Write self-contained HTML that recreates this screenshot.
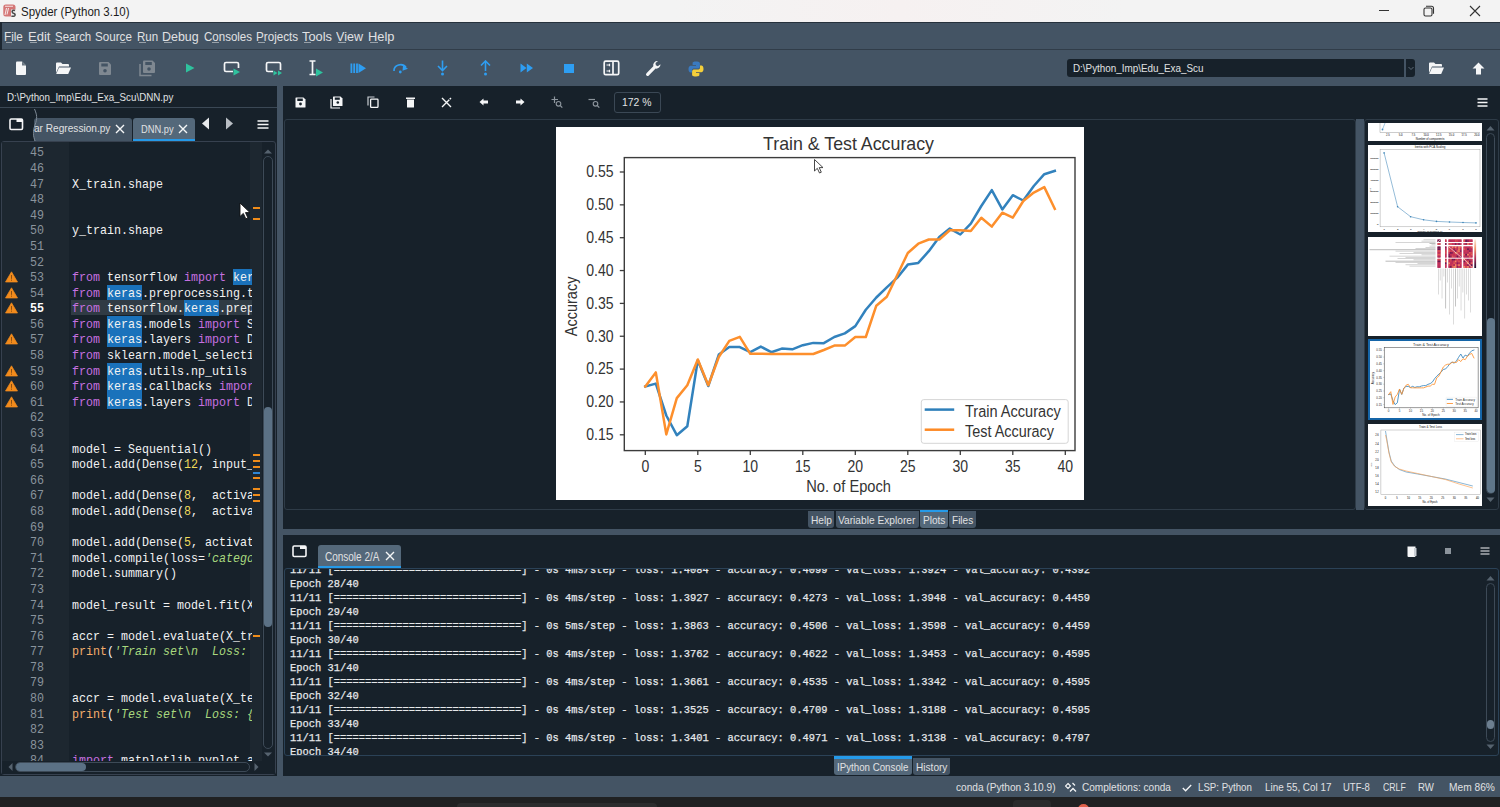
<!DOCTYPE html>
<html><head><meta charset="utf-8">
<style>
*{margin:0;padding:0;box-sizing:border-box}
html,body{width:1500px;height:807px;overflow:hidden}
body{position:relative;background:#17212a;font-family:"Liberation Sans",sans-serif;color:#e0e1e3}
.a{position:absolute}
.t{white-space:pre}
svg{display:block}
</style></head><body>
<div class="a" style="left:0px;top:0px;width:1500px;height:22px;background:linear-gradient(90deg,#f3f3f3 0%,#f3f3f3 45%,#f6f1f1 60%,#f3f3f3 75%);"></div>
<svg class="a" style="left:3px;top:4px;" width="13" height="13" viewBox="0 0 13 13"><rect x="0.3" y="0.5" width="12.2" height="12" rx="2.5" fill="#d47676"/><path d="M2 2.3 H10 M3.5 4 L2 11 M5.5 4 L4 10.5" stroke="#f6e4e4" stroke-width="1.1" fill="none"/><rect x="8" y="5.5" width="5" height="7" fill="#ededed"/><path d="M12 6.5 Q9 5.8 9.2 7.8 Q9.5 9.3 11 9.5 Q12.5 10 11.8 11.6 Q11 12.8 8.5 12" stroke="#4a4a4a" stroke-width="1.6" fill="none"/></svg>
<div class="a t" style="left:21.26px;top:5.90px;font-size:12.4px;line-height:12.4px;font-family:'Liberation Sans',sans-serif;color:#1b1b1b;transform:scaleX(0.9269);transform-origin:0 0;">Spyder (Python 3.10)</div>
<div class="a" style="left:1379px;top:10px;width:10px;height:1px;background:#333;"></div>
<svg class="a" style="left:1423px;top:5px;" width="12" height="12" viewBox="0 0 12 12"><rect x="1" y="3" width="8" height="8" rx="1.5" fill="none" stroke="#333" stroke-width="1.1"/><path d="M3 1.2 H8.5 a2 2 0 0 1 2 2 V8.8" fill="none" stroke="#333" stroke-width="1.1"/></svg>
<svg class="a" style="left:1469px;top:5px;" width="12" height="12" viewBox="0 0 12 12"><path d="M1 1 L11 11 M11 1 L1 11" stroke="#333" stroke-width="1.1"/></svg>
<div class="a" style="left:0px;top:22px;width:1500px;height:28px;background:#445464;"></div>
<div class="a" style="left:0px;top:22px;width:1500px;height:1px;background:#26313c;"></div>
<div class="a" style="left:0px;top:49px;width:1500px;height:1px;background:#313d49;"></div>
<div class="a" style="left:0px;top:22px;width:2px;height:28px;background:#1d2731;"></div>
<div class="a t" style="left:4.47px;top:31.07px;font-size:12.2px;line-height:12.2px;font-family:'Liberation Sans',sans-serif;color:#e0e1e3;transform:scaleX(0.9601);transform-origin:0 0;">File</div>
<div class="a t" style="left:28.07px;top:31.07px;font-size:12.2px;line-height:12.2px;font-family:'Liberation Sans',sans-serif;color:#e0e1e3;transform:scaleX(1.0652);transform-origin:0 0;">Edit</div>
<div class="a t" style="left:54.77px;top:31.07px;font-size:12.2px;line-height:12.2px;font-family:'Liberation Sans',sans-serif;color:#e0e1e3;transform:scaleX(0.9382);transform-origin:0 0;">Search</div>
<div class="a t" style="left:95.47px;top:31.07px;font-size:12.2px;line-height:12.2px;font-family:'Liberation Sans',sans-serif;color:#e0e1e3;transform:scaleX(0.9542);transform-origin:0 0;">Source</div>
<div class="a t" style="left:137.17px;top:31.07px;font-size:12.2px;line-height:12.2px;font-family:'Liberation Sans',sans-serif;color:#e0e1e3;transform:scaleX(0.9455);transform-origin:0 0;">Run</div>
<div class="a t" style="left:162.47px;top:31.07px;font-size:12.2px;line-height:12.2px;font-family:'Liberation Sans',sans-serif;color:#e0e1e3;transform:scaleX(1.0197);transform-origin:0 0;">Debug</div>
<div class="a t" style="left:203.77px;top:31.07px;font-size:12.2px;line-height:12.2px;font-family:'Liberation Sans',sans-serif;color:#e0e1e3;transform:scaleX(0.9455);transform-origin:0 0;">Consoles</div>
<div class="a t" style="left:256.37px;top:31.07px;font-size:12.2px;line-height:12.2px;font-family:'Liberation Sans',sans-serif;color:#e0e1e3;transform:scaleX(0.9574);transform-origin:0 0;">Projects</div>
<div class="a t" style="left:302.47px;top:31.07px;font-size:12.2px;line-height:12.2px;font-family:'Liberation Sans',sans-serif;color:#e0e1e3;transform:scaleX(1.0529);transform-origin:0 0;">Tools</div>
<div class="a t" style="left:336.47px;top:31.07px;font-size:12.2px;line-height:12.2px;font-family:'Liberation Sans',sans-serif;color:#e0e1e3;transform:scaleX(1.0280);transform-origin:0 0;">View</div>
<div class="a t" style="left:368.07px;top:31.07px;font-size:12.2px;line-height:12.2px;font-family:'Liberation Sans',sans-serif;color:#e0e1e3;transform:scaleX(1.0556);transform-origin:0 0;">Help</div>
<div class="a" style="left:6px;top:42px;width:6px;height:1px;background:rgba(224,225,227,.55);"></div>
<div class="a" style="left:30px;top:42px;width:7px;height:1px;background:rgba(224,225,227,.55);"></div>
<div class="a" style="left:56px;top:42px;width:7px;height:1px;background:rgba(224,225,227,.55);"></div>
<div class="a" style="left:120px;top:42px;width:6px;height:1px;background:rgba(224,225,227,.55);"></div>
<div class="a" style="left:139px;top:42px;width:7px;height:1px;background:rgba(224,225,227,.55);"></div>
<div class="a" style="left:164px;top:42px;width:8px;height:1px;background:rgba(224,225,227,.55);"></div>
<div class="a" style="left:212px;top:42px;width:7px;height:1px;background:rgba(224,225,227,.55);"></div>
<div class="a" style="left:258px;top:42px;width:7px;height:1px;background:rgba(224,225,227,.55);"></div>
<div class="a" style="left:304px;top:42px;width:7px;height:1px;background:rgba(224,225,227,.55);"></div>
<div class="a" style="left:338px;top:42px;width:8px;height:1px;background:rgba(224,225,227,.55);"></div>
<div class="a" style="left:370px;top:42px;width:8px;height:1px;background:rgba(224,225,227,.55);"></div>
<div class="a" style="left:0px;top:50px;width:1500px;height:36px;background:#445464;"></div>
<svg class="a" style="left:15px;top:61px;" width="12" height="15" viewBox="0 0 12 15"><path d="M1 1.5 Q1 0.5 2 0.5 H7 L11 4.5 V13 Q11 14 10 14 H2 Q1 14 1 13 Z" fill="#f5f6f7"/><path d="M7 0.5 V4.5 H11 Z" fill="#6a7682"/></svg>
<svg class="a" style="left:55px;top:62px;" width="17" height="13" viewBox="0 0 17 13"><path d="M1 1.5 Q1 0.5 2 0.5 H6 L7.5 2 H13 Q14 2 14 3 V4.5 H4 L1 11 Z" fill="#f5f6f7"/><path d="M4 5.5 H16 L13.2 12 H1.2 Z" fill="#f5f6f7"/></svg>
<svg class="a" style="left:98px;top:62px;" width="14" height="13" viewBox="0 0 14 13"><path d="M1 1 Q1 0 2 0 H10.5 L13 2.5 V12 Q13 13 12 13 H2 Q1 13 1 12 Z" fill="#7f8891"/><rect x="3.3" y="1.5" width="6.5" height="3" fill="#445464"/><circle cx="7" cy="8.8" r="1.8" fill="#445464"/></svg>
<svg class="a" style="left:139px;top:60px;" width="17" height="17" viewBox="0 0 17 17"><path d="M1 4 V15.5 H12.5" fill="none" stroke="#7f8891" stroke-width="1.5"/><path d="M4 1.5 Q4 0.5 5 0.5 H13.5 L16 3 V12 Q16 13 15 13 H5 Q4 13 4 12 Z" fill="#7f8891"/><rect x="6.3" y="2" width="6.5" height="3" fill="#445464"/><circle cx="10" cy="9" r="1.8" fill="#445464"/></svg>
<svg class="a" style="left:185px;top:63px;" width="10" height="10" viewBox="0 0 10 10"><path d="M1 0.5 L9.5 5 L1 9.5 Z" fill="#2fc29e"/></svg>
<svg class="a" style="left:223px;top:61px;" width="18" height="15" viewBox="0 0 18 15"><path d="M10 10.5 H3 Q1.5 10.5 1.5 9 V3 Q1.5 1.5 3 1.5 H14 Q15.5 1.5 15.5 3 V7" fill="none" stroke="#f5f6f7" stroke-width="1.7"/><path d="M10.5 7.5 L17 11 L10.5 14.5 Z" fill="#2fc29e"/></svg>
<svg class="a" style="left:265px;top:61px;" width="18" height="15" viewBox="0 0 18 15"><path d="M8 10.5 H3 Q1.5 10.5 1.5 9 V3 Q1.5 1.5 3 1.5 H14 Q15.5 1.5 15.5 3 V9" fill="none" stroke="#f5f6f7" stroke-width="1.7"/><path d="M8.5 9.5 L12.5 12 L8.5 14.5 Z M13 9.5 L17 12 L13 14.5 Z" fill="#2fc29e"/></svg>
<svg class="a" style="left:308px;top:60px;" width="16" height="17" viewBox="0 0 16 17"><path d="M1.5 1 H7.5 M4.5 1 V14.5 M1.5 14.5 H7.5" fill="none" stroke="#f5f6f7" stroke-width="1.7"/><path d="M8 8.5 L15 12.5 L8 16.5 Z" fill="#2fc29e"/></svg>
<svg class="a" style="left:350px;top:63px;" width="17" height="11" viewBox="0 0 17 11"><rect x="0.5" y="0.5" width="1.8" height="9.5" fill="#2e9ef2"/><rect x="3.3" y="0.5" width="1.8" height="9.5" fill="#2e9ef2"/><rect x="6.1" y="0.5" width="1.8" height="9.5" fill="#2e9ef2"/><path d="M8.5 0.5 L16 5.2 L8.5 10 Z" fill="#2e9ef2"/></svg>
<svg class="a" style="left:392px;top:62px;" width="17" height="12" viewBox="0 0 17 12"><path d="M2 9 A6.5 6 0 0 1 14 5.5" fill="none" stroke="#2e9ef2" stroke-width="1.7"/><path d="M11 3.5 L16 6.8 L10.5 8.8 Z" fill="#2e9ef2"/><circle cx="8.3" cy="10" r="1.4" fill="#2e9ef2"/></svg>
<svg class="a" style="left:436px;top:60px;" width="13" height="16" viewBox="0 0 13 16"><path d="M6.5 0.5 V10" stroke="#2e9ef2" stroke-width="1.6"/><path d="M2 6 L6.5 10.5 L11 6" fill="none" stroke="#2e9ef2" stroke-width="1.6"/><circle cx="6.5" cy="14" r="1.5" fill="#2e9ef2"/></svg>
<svg class="a" style="left:479px;top:60px;" width="13" height="16" viewBox="0 0 13 16"><path d="M6.5 2 V11" stroke="#2e9ef2" stroke-width="1.6"/><path d="M2 5.5 L6.5 1 L11 5.5" fill="none" stroke="#2e9ef2" stroke-width="1.6"/><circle cx="6.5" cy="14" r="1.5" fill="#2e9ef2"/></svg>
<svg class="a" style="left:520px;top:63px;" width="14" height="10" viewBox="0 0 14 10"><path d="M0.5 0.5 L6.5 5 L0.5 9.5 Z M6.8 0.5 L13 5 L6.8 9.5 Z" fill="#2e9ef2"/></svg>
<div class="a" style="left:564px;top:64px;width:10px;height:9px;background:#2e9ef2;"></div>
<svg class="a" style="left:603px;top:60px;" width="17" height="16" viewBox="0 0 17 16"><rect x="1.2" y="1.2" width="14.5" height="13.5" rx="1.5" fill="none" stroke="#f5f6f7" stroke-width="1.7"/><path d="M10 1.5 V14.5" stroke="#f5f6f7" stroke-width="1.7"/><path d="M3.5 5 H6.5 M3.5 11 H6.5" stroke="#f5f6f7" stroke-width="1.2"/><path d="M6.5 3.8 V6.2 M6.5 9.8 V12.2" stroke="#f5f6f7" stroke-width="1.2"/></svg>
<svg class="a" style="left:645px;top:60px;" width="17" height="17" viewBox="0 0 17 17"><path d="M15.5 4.2 L12.8 6.2 L10.8 5.2 L10.5 3 L13 1 A4.3 4.3 0 0 0 8.3 6.3 L1.5 13.2 A1.6 1.6 0 0 0 3.8 15.5 L10.6 8.6 A4.3 4.3 0 0 0 15.5 4.2 Z" fill="#f5f6f7"/></svg>
<svg class="a" style="left:688px;top:61px;" width="16" height="16" viewBox="0 0 16 16"><path d="M7.8 0.5 C4.5 0.5 4.6 1.9 4.6 1.9 V4 H8 V4.7 H3 C3 4.7 0.5 4.5 0.5 8 C0.5 11.5 2.6 11.4 2.6 11.4 H4 V9.6 C4 9.6 3.9 7.4 6.2 7.4 H9.8 C9.8 7.4 11.9 7.5 11.9 5.4 V2.3 C11.9 2.3 12.2 0.5 7.8 0.5 Z" fill="#3a7ac0"/><path d="M8.2 15.5 C11.5 15.5 11.4 14.1 11.4 14.1 V12 H8 V11.3 H13 C13 11.3 15.5 11.5 15.5 8 C15.5 4.5 13.4 4.6 13.4 4.6 H12 V6.4 C12 6.4 12.1 8.6 9.8 8.6 H6.2 C6.2 8.6 4.1 8.5 4.1 10.6 V13.7 C4.1 13.7 3.8 15.5 8.2 15.5 Z" fill="#f4cf3a"/></svg>
<div class="a" style="left:1067px;top:59px;width:348px;height:18px;background:#17212a;border-radius:3px"></div>
<div class="a" style="left:1404px;top:59px;width:2px;height:18px;background:#445464;"></div>
<svg class="a" style="left:1407px;top:64px;" width="8" height="8" viewBox="0 0 8 8"><path d="M1.5 3 L4 5.5 L6.5 3" fill="none" stroke="#5d6b78" stroke-width="1"/></svg>
<div class="a t" style="left:1073.34px;top:63.09px;font-size:11.0px;line-height:11.0px;font-family:'Liberation Sans',sans-serif;color:#e0e1e3;transform:scaleX(0.8959);transform-origin:0 0;">D:\Python_Imp\Edu_Exa_Scu</div>
<svg class="a" style="left:1428px;top:62px;" width="17" height="13" viewBox="0 0 17 13"><path d="M1 1.5 Q1 0.5 2 0.5 H6 L7.5 2 H13 Q14 2 14 3 V4.5 H4 L1 11 Z" fill="#f5f6f7"/><path d="M4 5.5 H16 L13.2 12 H1.2 Z" fill="#f5f6f7"/></svg>
<svg class="a" style="left:1472px;top:62px;" width="13" height="13" viewBox="0 0 13 13"><path d="M6.5 0.5 L12.5 6.5 H9 V12.5 H4 V6.5 H0.5 Z" fill="#f5f6f7"/></svg>
<div class="a" style="left:0px;top:86px;width:277px;height:690px;background:#17212a;"></div>
<div class="a t" style="left:6.93px;top:92.02px;font-size:11.2px;line-height:11.2px;font-family:'Liberation Sans',sans-serif;color:#e0e1e3;transform:scaleX(0.8744);transform-origin:0 0;">D:\Python_Imp\Edu_Exa_Scu\DNN.py</div>
<div class="a" style="left:0px;top:107px;width:277px;height:1px;background:#3b4855;"></div>
<svg class="a" style="left:9px;top:118px;" width="15" height="13" viewBox="0 0 15 13"><rect x="1" y="1" width="12.5" height="10.5" rx="1.2" fill="none" stroke="#f5f6f7" stroke-width="1.6"/><rect x="7.5" y="1" width="6" height="3" fill="#f5f6f7"/></svg>
<div class="a" style="left:34px;top:118px;width:98px;height:23px;background:#445464;border-radius:3px 3px 0 0"></div>
<svg class="a" style="left:31px;top:109px;" width="8" height="33" viewBox="0 0 8 33"><path d="M3.5 0 C6 6 6.5 9 4 16 C1.5 23 2 27 4.5 33" fill="none" stroke="#7e8a96" stroke-width="1"/></svg>
<div class="a" style="left:28px;top:109px;width:5px;height:33px;background:#17212a;"></div>
<div class="a t" style="left:34.33px;top:123.32px;font-size:11.2px;line-height:11.2px;font-family:'Liberation Sans',sans-serif;color:#e0e1e3;transform:scaleX(0.9036);transform-origin:0 0;">ar Regression.py</div>
<svg class="a" style="left:115px;top:124px;" width="10" height="10" viewBox="0 0 10 10"><path d="M1 1 L9 9 M9 1 L1 9" stroke="#f5f6f7" stroke-width="1.4"/></svg>
<div class="a" style="left:133px;top:118px;width:62px;height:24px;background:#54687a;border-radius:3px 3px 0 0"></div>
<div class="a" style="left:133px;top:139px;width:62px;height:3px;background:#259ae9;"></div>
<div class="a t" style="left:141.33px;top:123.52px;font-size:11.2px;line-height:11.2px;font-family:'Liberation Sans',sans-serif;color:#e0e1e3;transform:scaleX(0.8308);transform-origin:0 0;">DNN.py</div>
<svg class="a" style="left:178px;top:124px;" width="10" height="10" viewBox="0 0 10 10"><path d="M1 1 L9 9 M9 1 L1 9" stroke="#f5f6f7" stroke-width="1.4"/></svg>
<svg class="a" style="left:201px;top:117px;" width="9" height="13" viewBox="0 0 9 13"><path d="M8 0.5 V12.5 L1 6.5 Z" fill="#e8eaec"/></svg>
<svg class="a" style="left:225px;top:117px;" width="9" height="13" viewBox="0 0 9 13"><path d="M1 0.5 V12.5 L8 6.5 Z" fill="#b9bec4"/></svg>
<svg class="a" style="left:257px;top:120px;" width="12" height="9" viewBox="0 0 12 9"><path d="M0.5 1 H11.5 M0.5 4.5 H11.5 M0.5 8 H11.5" stroke="#f5f6f7" stroke-width="1.3"/></svg>
<div class="a" style="left:1px;top:141px;width:275px;height:634px;background:#17212a;border:1px solid #37414f;border-radius:3px"></div>
<div class="a" style="left:2px;top:142px;width:67px;height:620px;background:#1d2730;"></div>
<div class="a" style="left:250px;top:142px;width:12px;height:620px;background:#1d2730;"></div>
<div class="a" style="left:71px;top:300.40000000000003px;width:181px;height:14.9px;background:#303b44;"></div>
<div class="a t" style="left:29.80px;top:147.39px;font-size:12.8px;line-height:12.8px;font-family:'Liberation Mono',monospace;color:#8a949d;transform:scaleX(0.911);transform-origin:0 0;">45</div>
<div class="a t" style="left:29.80px;top:162.98px;font-size:12.8px;line-height:12.8px;font-family:'Liberation Mono',monospace;color:#8a949d;transform:scaleX(0.911);transform-origin:0 0;">46</div>
<div class="a t" style="left:29.80px;top:178.57px;font-size:12.8px;line-height:12.8px;font-family:'Liberation Mono',monospace;color:#8a949d;transform:scaleX(0.911);transform-origin:0 0;">47</div>
<div class="a t" style="left:29.80px;top:194.16px;font-size:12.8px;line-height:12.8px;font-family:'Liberation Mono',monospace;color:#8a949d;transform:scaleX(0.911);transform-origin:0 0;">48</div>
<div class="a t" style="left:29.80px;top:209.75px;font-size:12.8px;line-height:12.8px;font-family:'Liberation Mono',monospace;color:#8a949d;transform:scaleX(0.911);transform-origin:0 0;">49</div>
<div class="a t" style="left:29.80px;top:225.34px;font-size:12.8px;line-height:12.8px;font-family:'Liberation Mono',monospace;color:#8a949d;transform:scaleX(0.911);transform-origin:0 0;">50</div>
<div class="a t" style="left:29.80px;top:240.93px;font-size:12.8px;line-height:12.8px;font-family:'Liberation Mono',monospace;color:#8a949d;transform:scaleX(0.911);transform-origin:0 0;">51</div>
<div class="a t" style="left:29.80px;top:256.52px;font-size:12.8px;line-height:12.8px;font-family:'Liberation Mono',monospace;color:#8a949d;transform:scaleX(0.911);transform-origin:0 0;">52</div>
<div class="a t" style="left:29.80px;top:272.11px;font-size:12.8px;line-height:12.8px;font-family:'Liberation Mono',monospace;color:#8a949d;transform:scaleX(0.911);transform-origin:0 0;">53</div>
<div class="a t" style="left:29.80px;top:287.70px;font-size:12.8px;line-height:12.8px;font-family:'Liberation Mono',monospace;color:#8a949d;transform:scaleX(0.911);transform-origin:0 0;">54</div>
<div class="a t" style="left:29.80px;top:303.29px;font-size:12.8px;line-height:12.8px;font-family:'Liberation Mono',monospace;color:#ffffff;font-weight:bold;transform:scaleX(0.911);transform-origin:0 0;">55</div>
<div class="a t" style="left:29.80px;top:318.88px;font-size:12.8px;line-height:12.8px;font-family:'Liberation Mono',monospace;color:#8a949d;transform:scaleX(0.911);transform-origin:0 0;">56</div>
<div class="a t" style="left:29.80px;top:334.47px;font-size:12.8px;line-height:12.8px;font-family:'Liberation Mono',monospace;color:#8a949d;transform:scaleX(0.911);transform-origin:0 0;">57</div>
<div class="a t" style="left:29.80px;top:350.06px;font-size:12.8px;line-height:12.8px;font-family:'Liberation Mono',monospace;color:#8a949d;transform:scaleX(0.911);transform-origin:0 0;">58</div>
<div class="a t" style="left:29.80px;top:365.65px;font-size:12.8px;line-height:12.8px;font-family:'Liberation Mono',monospace;color:#8a949d;transform:scaleX(0.911);transform-origin:0 0;">59</div>
<div class="a t" style="left:29.80px;top:381.24px;font-size:12.8px;line-height:12.8px;font-family:'Liberation Mono',monospace;color:#8a949d;transform:scaleX(0.911);transform-origin:0 0;">60</div>
<div class="a t" style="left:29.80px;top:396.83px;font-size:12.8px;line-height:12.8px;font-family:'Liberation Mono',monospace;color:#8a949d;transform:scaleX(0.911);transform-origin:0 0;">61</div>
<div class="a t" style="left:29.80px;top:412.42px;font-size:12.8px;line-height:12.8px;font-family:'Liberation Mono',monospace;color:#8a949d;transform:scaleX(0.911);transform-origin:0 0;">62</div>
<div class="a t" style="left:29.80px;top:428.01px;font-size:12.8px;line-height:12.8px;font-family:'Liberation Mono',monospace;color:#8a949d;transform:scaleX(0.911);transform-origin:0 0;">63</div>
<div class="a t" style="left:29.80px;top:443.60px;font-size:12.8px;line-height:12.8px;font-family:'Liberation Mono',monospace;color:#8a949d;transform:scaleX(0.911);transform-origin:0 0;">64</div>
<div class="a t" style="left:29.80px;top:459.19px;font-size:12.8px;line-height:12.8px;font-family:'Liberation Mono',monospace;color:#8a949d;transform:scaleX(0.911);transform-origin:0 0;">65</div>
<div class="a t" style="left:29.80px;top:474.78px;font-size:12.8px;line-height:12.8px;font-family:'Liberation Mono',monospace;color:#8a949d;transform:scaleX(0.911);transform-origin:0 0;">66</div>
<div class="a t" style="left:29.80px;top:490.37px;font-size:12.8px;line-height:12.8px;font-family:'Liberation Mono',monospace;color:#8a949d;transform:scaleX(0.911);transform-origin:0 0;">67</div>
<div class="a t" style="left:29.80px;top:505.96px;font-size:12.8px;line-height:12.8px;font-family:'Liberation Mono',monospace;color:#8a949d;transform:scaleX(0.911);transform-origin:0 0;">68</div>
<div class="a t" style="left:29.80px;top:521.55px;font-size:12.8px;line-height:12.8px;font-family:'Liberation Mono',monospace;color:#8a949d;transform:scaleX(0.911);transform-origin:0 0;">69</div>
<div class="a t" style="left:29.80px;top:537.14px;font-size:12.8px;line-height:12.8px;font-family:'Liberation Mono',monospace;color:#8a949d;transform:scaleX(0.911);transform-origin:0 0;">70</div>
<div class="a t" style="left:29.80px;top:552.73px;font-size:12.8px;line-height:12.8px;font-family:'Liberation Mono',monospace;color:#8a949d;transform:scaleX(0.911);transform-origin:0 0;">71</div>
<div class="a t" style="left:29.80px;top:568.32px;font-size:12.8px;line-height:12.8px;font-family:'Liberation Mono',monospace;color:#8a949d;transform:scaleX(0.911);transform-origin:0 0;">72</div>
<div class="a t" style="left:29.80px;top:583.91px;font-size:12.8px;line-height:12.8px;font-family:'Liberation Mono',monospace;color:#8a949d;transform:scaleX(0.911);transform-origin:0 0;">73</div>
<div class="a t" style="left:29.80px;top:599.50px;font-size:12.8px;line-height:12.8px;font-family:'Liberation Mono',monospace;color:#8a949d;transform:scaleX(0.911);transform-origin:0 0;">74</div>
<div class="a t" style="left:29.80px;top:615.09px;font-size:12.8px;line-height:12.8px;font-family:'Liberation Mono',monospace;color:#8a949d;transform:scaleX(0.911);transform-origin:0 0;">75</div>
<div class="a t" style="left:29.80px;top:630.68px;font-size:12.8px;line-height:12.8px;font-family:'Liberation Mono',monospace;color:#8a949d;transform:scaleX(0.911);transform-origin:0 0;">76</div>
<div class="a t" style="left:29.80px;top:646.27px;font-size:12.8px;line-height:12.8px;font-family:'Liberation Mono',monospace;color:#8a949d;transform:scaleX(0.911);transform-origin:0 0;">77</div>
<div class="a t" style="left:29.80px;top:661.86px;font-size:12.8px;line-height:12.8px;font-family:'Liberation Mono',monospace;color:#8a949d;transform:scaleX(0.911);transform-origin:0 0;">78</div>
<div class="a t" style="left:29.80px;top:677.45px;font-size:12.8px;line-height:12.8px;font-family:'Liberation Mono',monospace;color:#8a949d;transform:scaleX(0.911);transform-origin:0 0;">79</div>
<div class="a t" style="left:29.80px;top:693.04px;font-size:12.8px;line-height:12.8px;font-family:'Liberation Mono',monospace;color:#8a949d;transform:scaleX(0.911);transform-origin:0 0;">80</div>
<div class="a t" style="left:29.80px;top:708.63px;font-size:12.8px;line-height:12.8px;font-family:'Liberation Mono',monospace;color:#8a949d;transform:scaleX(0.911);transform-origin:0 0;">81</div>
<div class="a t" style="left:29.80px;top:724.22px;font-size:12.8px;line-height:12.8px;font-family:'Liberation Mono',monospace;color:#8a949d;transform:scaleX(0.911);transform-origin:0 0;">82</div>
<div class="a t" style="left:29.80px;top:739.81px;font-size:12.8px;line-height:12.8px;font-family:'Liberation Mono',monospace;color:#8a949d;transform:scaleX(0.911);transform-origin:0 0;">83</div>
<div class="a t" style="left:29.80px;top:755.40px;font-size:12.8px;line-height:12.8px;font-family:'Liberation Mono',monospace;color:#8a949d;transform:scaleX(0.911);transform-origin:0 0;">84</div>
<svg class="a" style="left:5px;top:271.11999999999995px;" width="13" height="12" viewBox="0 0 13 12"><path d="M6.5 0.8 L12.5 11 H0.5 Z" fill="#f28b1c" stroke="#f28b1c" stroke-width="0.7" stroke-linejoin="round"/><rect x="6" y="4" width="1" height="3.8" fill="#8a4f12"/><rect x="6" y="8.6" width="1" height="1.1" fill="#8a4f12"/></svg>
<svg class="a" style="left:5px;top:286.71px;" width="13" height="12" viewBox="0 0 13 12"><path d="M6.5 0.8 L12.5 11 H0.5 Z" fill="#f28b1c" stroke="#f28b1c" stroke-width="0.7" stroke-linejoin="round"/><rect x="6" y="4" width="1" height="3.8" fill="#8a4f12"/><rect x="6" y="8.6" width="1" height="1.1" fill="#8a4f12"/></svg>
<svg class="a" style="left:5px;top:302.3px;" width="13" height="12" viewBox="0 0 13 12"><path d="M6.5 0.8 L12.5 11 H0.5 Z" fill="#f28b1c" stroke="#f28b1c" stroke-width="0.7" stroke-linejoin="round"/><rect x="6" y="4" width="1" height="3.8" fill="#8a4f12"/><rect x="6" y="8.6" width="1" height="1.1" fill="#8a4f12"/></svg>
<svg class="a" style="left:5px;top:333.47999999999996px;" width="13" height="12" viewBox="0 0 13 12"><path d="M6.5 0.8 L12.5 11 H0.5 Z" fill="#f28b1c" stroke="#f28b1c" stroke-width="0.7" stroke-linejoin="round"/><rect x="6" y="4" width="1" height="3.8" fill="#8a4f12"/><rect x="6" y="8.6" width="1" height="1.1" fill="#8a4f12"/></svg>
<svg class="a" style="left:5px;top:364.65999999999997px;" width="13" height="12" viewBox="0 0 13 12"><path d="M6.5 0.8 L12.5 11 H0.5 Z" fill="#f28b1c" stroke="#f28b1c" stroke-width="0.7" stroke-linejoin="round"/><rect x="6" y="4" width="1" height="3.8" fill="#8a4f12"/><rect x="6" y="8.6" width="1" height="1.1" fill="#8a4f12"/></svg>
<svg class="a" style="left:5px;top:380.24999999999994px;" width="13" height="12" viewBox="0 0 13 12"><path d="M6.5 0.8 L12.5 11 H0.5 Z" fill="#f28b1c" stroke="#f28b1c" stroke-width="0.7" stroke-linejoin="round"/><rect x="6" y="4" width="1" height="3.8" fill="#8a4f12"/><rect x="6" y="8.6" width="1" height="1.1" fill="#8a4f12"/></svg>
<svg class="a" style="left:5px;top:395.84px;" width="13" height="12" viewBox="0 0 13 12"><path d="M6.5 0.8 L12.5 11 H0.5 Z" fill="#f28b1c" stroke="#f28b1c" stroke-width="0.7" stroke-linejoin="round"/><rect x="6" y="4" width="1" height="3.8" fill="#8a4f12"/><rect x="6" y="8.6" width="1" height="1.1" fill="#8a4f12"/></svg>
<div class="a" style="left:71.7px;top:142px;width:180.5px;height:620px;overflow:hidden">
<div class="a t" style="left:0.00px;top:36.57px;font-size:12.8px;line-height:12.8px;font-family:'Liberation Mono',monospace;color:#f2f2f2;transform:scaleX(0.911);transform-origin:0 0;">X_train.shape</div>
<div class="a t" style="left:0.00px;top:83.34px;font-size:12.8px;line-height:12.8px;font-family:'Liberation Mono',monospace;color:#f2f2f2;transform:scaleX(0.911);transform-origin:0 0;">y_train.shape</div>
<div class="a t" style="left:0.00px;top:130.11px;font-size:12.8px;line-height:12.8px;font-family:'Liberation Mono',monospace;color:#c670e0;transform:scaleX(0.911);transform-origin:0 0;">from</div>
<div class="a t" style="left:28.00px;top:130.11px;font-size:12.8px;line-height:12.8px;font-family:'Liberation Mono',monospace;color:#f2f2f2;transform:scaleX(0.911);transform-origin:0 0;"> tensorflow </div>
<div class="a t" style="left:112.00px;top:130.11px;font-size:12.8px;line-height:12.8px;font-family:'Liberation Mono',monospace;color:#c670e0;transform:scaleX(0.911);transform-origin:0 0;">import</div>
<div class="a t" style="left:154.00px;top:130.11px;font-size:12.8px;line-height:12.8px;font-family:'Liberation Mono',monospace;color:#f2f2f2;transform:scaleX(0.911);transform-origin:0 0;"> </div>
<div class="a" style="left:161.00px;top:127.12px;width:35.00px;height:15.6px;background:#1a72bb"></div>
<div class="a t" style="left:161.00px;top:130.11px;font-size:12.8px;line-height:12.8px;font-family:'Liberation Mono',monospace;color:#f2f2f2;transform:scaleX(0.911);transform-origin:0 0;">keras</div>
<div class="a t" style="left:0.00px;top:145.70px;font-size:12.8px;line-height:12.8px;font-family:'Liberation Mono',monospace;color:#c670e0;transform:scaleX(0.911);transform-origin:0 0;">from</div>
<div class="a t" style="left:28.00px;top:145.70px;font-size:12.8px;line-height:12.8px;font-family:'Liberation Mono',monospace;color:#f2f2f2;transform:scaleX(0.911);transform-origin:0 0;"> </div>
<div class="a" style="left:35.00px;top:142.71px;width:35.00px;height:15.6px;background:#1a72bb"></div>
<div class="a t" style="left:35.00px;top:145.70px;font-size:12.8px;line-height:12.8px;font-family:'Liberation Mono',monospace;color:#f2f2f2;transform:scaleX(0.911);transform-origin:0 0;">keras</div>
<div class="a t" style="left:70.00px;top:145.70px;font-size:12.8px;line-height:12.8px;font-family:'Liberation Mono',monospace;color:#f2f2f2;transform:scaleX(0.911);transform-origin:0 0;">.preprocessing.text</div>
<div class="a t" style="left:0.00px;top:161.29px;font-size:12.8px;line-height:12.8px;font-family:'Liberation Mono',monospace;color:#c670e0;transform:scaleX(0.911);transform-origin:0 0;">from</div>
<div class="a t" style="left:28.00px;top:161.29px;font-size:12.8px;line-height:12.8px;font-family:'Liberation Mono',monospace;color:#f2f2f2;transform:scaleX(0.911);transform-origin:0 0;"> tensorflow.</div>
<div class="a" style="left:112.00px;top:158.30px;width:35.00px;height:15.6px;background:#1a72bb"></div>
<div class="a t" style="left:112.00px;top:161.29px;font-size:12.8px;line-height:12.8px;font-family:'Liberation Mono',monospace;color:#f2f2f2;transform:scaleX(0.911);transform-origin:0 0;">keras</div>
<div class="a t" style="left:147.00px;top:161.29px;font-size:12.8px;line-height:12.8px;font-family:'Liberation Mono',monospace;color:#f2f2f2;transform:scaleX(0.911);transform-origin:0 0;">.preprocessing</div>
<div class="a t" style="left:0.00px;top:176.88px;font-size:12.8px;line-height:12.8px;font-family:'Liberation Mono',monospace;color:#c670e0;transform:scaleX(0.911);transform-origin:0 0;">from</div>
<div class="a t" style="left:28.00px;top:176.88px;font-size:12.8px;line-height:12.8px;font-family:'Liberation Mono',monospace;color:#f2f2f2;transform:scaleX(0.911);transform-origin:0 0;"> </div>
<div class="a" style="left:35.00px;top:173.89px;width:35.00px;height:15.6px;background:#1a72bb"></div>
<div class="a t" style="left:35.00px;top:176.88px;font-size:12.8px;line-height:12.8px;font-family:'Liberation Mono',monospace;color:#f2f2f2;transform:scaleX(0.911);transform-origin:0 0;">keras</div>
<div class="a t" style="left:70.00px;top:176.88px;font-size:12.8px;line-height:12.8px;font-family:'Liberation Mono',monospace;color:#f2f2f2;transform:scaleX(0.911);transform-origin:0 0;">.models </div>
<div class="a t" style="left:126.00px;top:176.88px;font-size:12.8px;line-height:12.8px;font-family:'Liberation Mono',monospace;color:#c670e0;transform:scaleX(0.911);transform-origin:0 0;">import</div>
<div class="a t" style="left:168.00px;top:176.88px;font-size:12.8px;line-height:12.8px;font-family:'Liberation Mono',monospace;color:#f2f2f2;transform:scaleX(0.911);transform-origin:0 0;"> Sequential</div>
<div class="a t" style="left:0.00px;top:192.47px;font-size:12.8px;line-height:12.8px;font-family:'Liberation Mono',monospace;color:#c670e0;transform:scaleX(0.911);transform-origin:0 0;">from</div>
<div class="a t" style="left:28.00px;top:192.47px;font-size:12.8px;line-height:12.8px;font-family:'Liberation Mono',monospace;color:#f2f2f2;transform:scaleX(0.911);transform-origin:0 0;"> </div>
<div class="a" style="left:35.00px;top:189.48px;width:35.00px;height:15.6px;background:#1a72bb"></div>
<div class="a t" style="left:35.00px;top:192.47px;font-size:12.8px;line-height:12.8px;font-family:'Liberation Mono',monospace;color:#f2f2f2;transform:scaleX(0.911);transform-origin:0 0;">keras</div>
<div class="a t" style="left:70.00px;top:192.47px;font-size:12.8px;line-height:12.8px;font-family:'Liberation Mono',monospace;color:#f2f2f2;transform:scaleX(0.911);transform-origin:0 0;">.layers </div>
<div class="a t" style="left:126.00px;top:192.47px;font-size:12.8px;line-height:12.8px;font-family:'Liberation Mono',monospace;color:#c670e0;transform:scaleX(0.911);transform-origin:0 0;">import</div>
<div class="a t" style="left:168.00px;top:192.47px;font-size:12.8px;line-height:12.8px;font-family:'Liberation Mono',monospace;color:#f2f2f2;transform:scaleX(0.911);transform-origin:0 0;"> Dense</div>
<div class="a t" style="left:0.00px;top:208.06px;font-size:12.8px;line-height:12.8px;font-family:'Liberation Mono',monospace;color:#c670e0;transform:scaleX(0.911);transform-origin:0 0;">from</div>
<div class="a t" style="left:28.00px;top:208.06px;font-size:12.8px;line-height:12.8px;font-family:'Liberation Mono',monospace;color:#f2f2f2;transform:scaleX(0.911);transform-origin:0 0;"> sklearn.model_selection</div>
<div class="a t" style="left:0.00px;top:223.65px;font-size:12.8px;line-height:12.8px;font-family:'Liberation Mono',monospace;color:#c670e0;transform:scaleX(0.911);transform-origin:0 0;">from</div>
<div class="a t" style="left:28.00px;top:223.65px;font-size:12.8px;line-height:12.8px;font-family:'Liberation Mono',monospace;color:#f2f2f2;transform:scaleX(0.911);transform-origin:0 0;"> </div>
<div class="a" style="left:35.00px;top:220.66px;width:35.00px;height:15.6px;background:#1a72bb"></div>
<div class="a t" style="left:35.00px;top:223.65px;font-size:12.8px;line-height:12.8px;font-family:'Liberation Mono',monospace;color:#f2f2f2;transform:scaleX(0.911);transform-origin:0 0;">keras</div>
<div class="a t" style="left:70.00px;top:223.65px;font-size:12.8px;line-height:12.8px;font-family:'Liberation Mono',monospace;color:#f2f2f2;transform:scaleX(0.911);transform-origin:0 0;">.utils.np_utils </div>
<div class="a t" style="left:182.00px;top:223.65px;font-size:12.8px;line-height:12.8px;font-family:'Liberation Mono',monospace;color:#c670e0;transform:scaleX(0.911);transform-origin:0 0;">import</div>
<div class="a t" style="left:0.00px;top:239.24px;font-size:12.8px;line-height:12.8px;font-family:'Liberation Mono',monospace;color:#c670e0;transform:scaleX(0.911);transform-origin:0 0;">from</div>
<div class="a t" style="left:28.00px;top:239.24px;font-size:12.8px;line-height:12.8px;font-family:'Liberation Mono',monospace;color:#f2f2f2;transform:scaleX(0.911);transform-origin:0 0;"> </div>
<div class="a" style="left:35.00px;top:236.25px;width:35.00px;height:15.6px;background:#1a72bb"></div>
<div class="a t" style="left:35.00px;top:239.24px;font-size:12.8px;line-height:12.8px;font-family:'Liberation Mono',monospace;color:#f2f2f2;transform:scaleX(0.911);transform-origin:0 0;">keras</div>
<div class="a t" style="left:70.00px;top:239.24px;font-size:12.8px;line-height:12.8px;font-family:'Liberation Mono',monospace;color:#f2f2f2;transform:scaleX(0.911);transform-origin:0 0;">.callbacks </div>
<div class="a t" style="left:147.00px;top:239.24px;font-size:12.8px;line-height:12.8px;font-family:'Liberation Mono',monospace;color:#c670e0;transform:scaleX(0.911);transform-origin:0 0;">import</div>
<div class="a t" style="left:0.00px;top:254.83px;font-size:12.8px;line-height:12.8px;font-family:'Liberation Mono',monospace;color:#c670e0;transform:scaleX(0.911);transform-origin:0 0;">from</div>
<div class="a t" style="left:28.00px;top:254.83px;font-size:12.8px;line-height:12.8px;font-family:'Liberation Mono',monospace;color:#f2f2f2;transform:scaleX(0.911);transform-origin:0 0;"> </div>
<div class="a" style="left:35.00px;top:251.84px;width:35.00px;height:15.6px;background:#1a72bb"></div>
<div class="a t" style="left:35.00px;top:254.83px;font-size:12.8px;line-height:12.8px;font-family:'Liberation Mono',monospace;color:#f2f2f2;transform:scaleX(0.911);transform-origin:0 0;">keras</div>
<div class="a t" style="left:70.00px;top:254.83px;font-size:12.8px;line-height:12.8px;font-family:'Liberation Mono',monospace;color:#f2f2f2;transform:scaleX(0.911);transform-origin:0 0;">.layers </div>
<div class="a t" style="left:126.00px;top:254.83px;font-size:12.8px;line-height:12.8px;font-family:'Liberation Mono',monospace;color:#c670e0;transform:scaleX(0.911);transform-origin:0 0;">import</div>
<div class="a t" style="left:168.00px;top:254.83px;font-size:12.8px;line-height:12.8px;font-family:'Liberation Mono',monospace;color:#f2f2f2;transform:scaleX(0.911);transform-origin:0 0;"> Dropout</div>
<div class="a t" style="left:0.00px;top:301.60px;font-size:12.8px;line-height:12.8px;font-family:'Liberation Mono',monospace;color:#f2f2f2;transform:scaleX(0.911);transform-origin:0 0;">model = Sequential()</div>
<div class="a t" style="left:0.00px;top:317.19px;font-size:12.8px;line-height:12.8px;font-family:'Liberation Mono',monospace;color:#f2f2f2;transform:scaleX(0.911);transform-origin:0 0;">model.add(Dense(</div>
<div class="a t" style="left:112.00px;top:317.19px;font-size:12.8px;line-height:12.8px;font-family:'Liberation Mono',monospace;color:#f0dc5a;transform:scaleX(0.911);transform-origin:0 0;">12</div>
<div class="a t" style="left:126.00px;top:317.19px;font-size:12.8px;line-height:12.8px;font-family:'Liberation Mono',monospace;color:#f2f2f2;transform:scaleX(0.911);transform-origin:0 0;">, input_dim</div>
<div class="a t" style="left:0.00px;top:348.37px;font-size:12.8px;line-height:12.8px;font-family:'Liberation Mono',monospace;color:#f2f2f2;transform:scaleX(0.911);transform-origin:0 0;">model.add(Dense(</div>
<div class="a t" style="left:112.00px;top:348.37px;font-size:12.8px;line-height:12.8px;font-family:'Liberation Mono',monospace;color:#f0dc5a;transform:scaleX(0.911);transform-origin:0 0;">8</div>
<div class="a t" style="left:119.00px;top:348.37px;font-size:12.8px;line-height:12.8px;font-family:'Liberation Mono',monospace;color:#f2f2f2;transform:scaleX(0.911);transform-origin:0 0;">,  activation</div>
<div class="a t" style="left:0.00px;top:363.96px;font-size:12.8px;line-height:12.8px;font-family:'Liberation Mono',monospace;color:#f2f2f2;transform:scaleX(0.911);transform-origin:0 0;">model.add(Dense(</div>
<div class="a t" style="left:112.00px;top:363.96px;font-size:12.8px;line-height:12.8px;font-family:'Liberation Mono',monospace;color:#f0dc5a;transform:scaleX(0.911);transform-origin:0 0;">8</div>
<div class="a t" style="left:119.00px;top:363.96px;font-size:12.8px;line-height:12.8px;font-family:'Liberation Mono',monospace;color:#f2f2f2;transform:scaleX(0.911);transform-origin:0 0;">,  activation</div>
<div class="a t" style="left:0.00px;top:395.14px;font-size:12.8px;line-height:12.8px;font-family:'Liberation Mono',monospace;color:#f2f2f2;transform:scaleX(0.911);transform-origin:0 0;">model.add(Dense(</div>
<div class="a t" style="left:112.00px;top:395.14px;font-size:12.8px;line-height:12.8px;font-family:'Liberation Mono',monospace;color:#f0dc5a;transform:scaleX(0.911);transform-origin:0 0;">5</div>
<div class="a t" style="left:119.00px;top:395.14px;font-size:12.8px;line-height:12.8px;font-family:'Liberation Mono',monospace;color:#f2f2f2;transform:scaleX(0.911);transform-origin:0 0;">, activation</div>
<div class="a t" style="left:0.00px;top:410.73px;font-size:12.8px;line-height:12.8px;font-family:'Liberation Mono',monospace;color:#f2f2f2;transform:scaleX(0.911);transform-origin:0 0;">model.compile(loss=</div>
<div class="a t" style="left:133.00px;top:410.73px;font-size:12.8px;line-height:12.8px;font-family:'Liberation Mono',monospace;color:#a8d87e;font-style:italic;transform:scaleX(0.911);transform-origin:0 0;">&#x27;categorical</div>
<div class="a t" style="left:0.00px;top:426.32px;font-size:12.8px;line-height:12.8px;font-family:'Liberation Mono',monospace;color:#f2f2f2;transform:scaleX(0.911);transform-origin:0 0;">model.summary()</div>
<div class="a t" style="left:0.00px;top:457.50px;font-size:12.8px;line-height:12.8px;font-family:'Liberation Mono',monospace;color:#f2f2f2;transform:scaleX(0.911);transform-origin:0 0;">model_result = model.fit(X_train</div>
<div class="a t" style="left:0.00px;top:488.68px;font-size:12.8px;line-height:12.8px;font-family:'Liberation Mono',monospace;color:#f2f2f2;transform:scaleX(0.911);transform-origin:0 0;">accr = model.evaluate(X_train</div>
<div class="a t" style="left:0.00px;top:504.27px;font-size:12.8px;line-height:12.8px;font-family:'Liberation Mono',monospace;color:#f4ac6a;transform:scaleX(0.911);transform-origin:0 0;">print</div>
<div class="a t" style="left:35.00px;top:504.27px;font-size:12.8px;line-height:12.8px;font-family:'Liberation Mono',monospace;color:#f2f2f2;transform:scaleX(0.911);transform-origin:0 0;">(</div>
<div class="a t" style="left:42.00px;top:504.27px;font-size:12.8px;line-height:12.8px;font-family:'Liberation Mono',monospace;color:#a8d87e;font-style:italic;transform:scaleX(0.911);transform-origin:0 0;">&#x27;Train set\n  Loss: {</div>
<div class="a t" style="left:0.00px;top:551.04px;font-size:12.8px;line-height:12.8px;font-family:'Liberation Mono',monospace;color:#f2f2f2;transform:scaleX(0.911);transform-origin:0 0;">accr = model.evaluate(X_test</div>
<div class="a t" style="left:0.00px;top:566.63px;font-size:12.8px;line-height:12.8px;font-family:'Liberation Mono',monospace;color:#f4ac6a;transform:scaleX(0.911);transform-origin:0 0;">print</div>
<div class="a t" style="left:35.00px;top:566.63px;font-size:12.8px;line-height:12.8px;font-family:'Liberation Mono',monospace;color:#f2f2f2;transform:scaleX(0.911);transform-origin:0 0;">(</div>
<div class="a t" style="left:42.00px;top:566.63px;font-size:12.8px;line-height:12.8px;font-family:'Liberation Mono',monospace;color:#a8d87e;font-style:italic;transform:scaleX(0.911);transform-origin:0 0;">&#x27;Test set\n  Loss: {</div>
<div class="a t" style="left:0.00px;top:613.40px;font-size:12.8px;line-height:12.8px;font-family:'Liberation Mono',monospace;color:#c670e0;transform:scaleX(0.911);transform-origin:0 0;">import</div>
<div class="a t" style="left:42.00px;top:613.40px;font-size:12.8px;line-height:12.8px;font-family:'Liberation Mono',monospace;color:#f2f2f2;transform:scaleX(0.911);transform-origin:0 0;"> matplotlib.pyplot as</div>
</div>
<div class="a" style="left:253px;top:206.6px;width:7px;height:2px;background:#f08c1a;"></div>
<div class="a" style="left:253px;top:218px;width:7px;height:2px;background:#f08c1a;"></div>
<div class="a" style="left:253px;top:454.4px;width:7px;height:2px;background:#f08c1a;"></div>
<div class="a" style="left:253px;top:460px;width:7px;height:2px;background:#f08c1a;"></div>
<div class="a" style="left:253px;top:466.1px;width:7px;height:2px;background:#f08c1a;"></div>
<div class="a" style="left:253px;top:477px;width:7px;height:2px;background:#f08c1a;"></div>
<div class="a" style="left:253px;top:488.2px;width:7px;height:2px;background:#f08c1a;"></div>
<div class="a" style="left:253px;top:494.3px;width:7px;height:2px;background:#f08c1a;"></div>
<div class="a" style="left:253px;top:499.7px;width:7px;height:2px;background:#f08c1a;"></div>
<div class="a" style="left:253px;top:635px;width:7px;height:2px;background:#f08c1a;"></div>
<div class="a" style="left:253px;top:471.6px;width:7px;height:2px;background:#2e86d6;"></div>
<svg class="a" style="left:263px;top:148px;" width="10" height="6" viewBox="0 0 10 6"><path d="M1 5.5 L5 1.5 L9 5.5 Z" fill="#56636f"/></svg>
<div class="a" style="left:263px;top:156px;width:10px;height:593px;background:transparent;border:1px solid #3d4a57;border-radius:5px"></div>
<div class="a" style="left:264px;top:407px;width:8px;height:220px;background:#5b7185;border-radius:4px"></div>
<svg class="a" style="left:263px;top:752px;" width="10" height="6" viewBox="0 0 10 6"><path d="M1 0.5 L5 4.5 L9 0.5 Z" fill="#56636f"/></svg>
<div class="a" style="left:2px;top:761px;width:273px;height:13px;background:#17212a;"></div>
<svg class="a" style="left:7px;top:762px;" width="6" height="10" viewBox="0 0 6 10"><path d="M5.5 1 L1.5 5 L5.5 9 Z" fill="#56636f"/></svg>
<div class="a" style="left:15px;top:762px;width:235px;height:10px;background:transparent;border:1px solid #3d4a57;border-radius:5px"></div>
<div class="a" style="left:16px;top:763px;width:70px;height:8px;background:#5b7185;border-radius:4px"></div>
<svg class="a" style="left:254px;top:762px;" width="6" height="10" viewBox="0 0 6 10"><path d="M0.5 1 L4.5 5 L0.5 9 Z" fill="#56636f"/></svg>
<div class="a" style="left:277px;top:86px;width:6px;height:690px;background:#445464;"></div>
<svg class="a" style="left:239px;top:202px;" width="12" height="18" viewBox="0 0 12 18"><path d="M1 1 V14.5 L4.3 11.4 L6.8 16.8 L8.9 15.9 L6.5 10.6 H11 Z" fill="#ffffff" stroke="#111" stroke-width="0.9" stroke-linejoin="round"/></svg>
<div class="a" style="left:283px;top:86px;width:1217px;height:444px;background:#17212a;"></div>
<svg class="a" style="left:295px;top:97px;" width="11" height="11" viewBox="0 0 11 11"><path d="M0.5 1 Q0.5 0.5 1 0.5 H8.5 L10.5 2.5 V10 Q10.5 10.5 10 10.5 H1 Q0.5 10.5 0.5 10 Z" fill="#f5f6f7"/><rect x="2.3" y="1.5" width="5.5" height="2.5" fill="#17212a"/><circle cx="5.5" cy="7" r="1.4" fill="#17212a"/></svg>
<svg class="a" style="left:330px;top:96px;" width="13" height="13" viewBox="0 0 13 13"><path d="M1 3 V12 H10" fill="none" stroke="#f5f6f7" stroke-width="1.2"/><path d="M3 1 Q3 0.5 3.5 0.5 H10.5 L12.5 2.5 V9.5 Q12.5 10 12 10 H3.5 Q3 10 3 9.5 Z" fill="#f5f6f7"/><rect x="4.8" y="1.5" width="5" height="2.3" fill="#17212a"/><circle cx="7.8" cy="6.5" r="1.3" fill="#17212a"/></svg>
<svg class="a" style="left:367px;top:96px;" width="12" height="12" viewBox="0 0 12 12"><path d="M1 9.5 V1 H7.5" fill="none" stroke="#c9ced3" stroke-width="1.2"/><rect x="3.6" y="3.2" width="7.4" height="8.2" rx="0.8" fill="none" stroke="#f5f6f7" stroke-width="1.3"/></svg>
<svg class="a" style="left:406px;top:97px;" width="9" height="11" viewBox="0 0 9 11"><rect x="0" y="0.5" width="9" height="1.5" fill="#f5f6f7"/><path d="M1 2.5 H8 V10 Q8 10.5 7.5 10.5 H1.5 Q1 10.5 1 10 Z" fill="#f5f6f7"/></svg>
<svg class="a" style="left:441px;top:97px;" width="11" height="11" viewBox="0 0 11 11"><path d="M1 1 L10 10 M10 1 L1 10" stroke="#f5f6f7" stroke-width="1.4"/><path d="M7.5 1.5 L9.5 3.5" stroke="#17212a" stroke-width="0.8"/></svg>
<svg class="a" style="left:479px;top:98px;" width="10" height="8" viewBox="0 0 10 8"><path d="M0.5 4 L4.5 0.5 V2.5 H9 V5.5 H4.5 V7.5 Z" fill="#f5f6f7"/></svg>
<svg class="a" style="left:515px;top:98px;" width="10" height="8" viewBox="0 0 10 8"><path d="M9.5 4 L5.5 0.5 V2.5 H1 V5.5 H5.5 V7.5 Z" fill="#f5f6f7"/></svg>
<svg class="a" style="left:551px;top:96px;" width="12" height="12" viewBox="0 0 12 12"><path d="M3.5 0.5 V7 M0.5 3.5 H7" stroke="#8c949c" stroke-width="1.2"/><circle cx="7.5" cy="7.8" r="2.3" fill="none" stroke="#8c949c" stroke-width="1.1"/><path d="M9.2 9.5 L11.3 11.6" stroke="#8c949c" stroke-width="1.2"/></svg>
<svg class="a" style="left:588px;top:96px;" width="12" height="12" viewBox="0 0 12 12"><path d="M0.5 3.5 H7" stroke="#8c949c" stroke-width="1.2"/><circle cx="7.5" cy="7.8" r="2.3" fill="none" stroke="#8c949c" stroke-width="1.1"/><path d="M9.2 9.5 L11.3 11.6" stroke="#8c949c" stroke-width="1.2"/></svg>
<div class="a" style="left:614px;top:92px;width:47px;height:21px;background:transparent;border:1px solid #3b4855;border-radius:3px"></div>
<div class="a t" style="left:622.29px;top:97.01px;font-size:11.8px;line-height:11.8px;font-family:'Liberation Sans',sans-serif;color:#e0e1e3;transform:scaleX(0.8800);transform-origin:0 0;">172 %</div>
<svg class="a" style="left:1477px;top:98px;" width="11" height="9" viewBox="0 0 11 9"><path d="M0.5 1 H10.5 M0.5 4.5 H10.5 M0.5 8 H10.5" stroke="#f5f6f7" stroke-width="1.3"/></svg>
<div class="a" style="left:284px;top:119px;width:1072px;height:391px;background:#17212a;border:1px solid #2e3b47;border-radius:3px"></div>
<div class="a" style="left:1356px;top:119px;width:8px;height:391px;background:#445464;"></div>
<div class="a" style="left:1364px;top:119px;width:135px;height:391px;background:#17212a;border:1px solid #2e3b47;border-radius:3px"></div>
<svg class="a" style="left:1486px;top:125px;" width="9" height="6" viewBox="0 0 9 6"><path d="M0.5 5.5 L4.5 1 L8.5 5.5 Z" fill="#56636f"/></svg>
<div class="a" style="left:1486px;top:133px;width:9px;height:361px;background:transparent;border:1px solid #3d4a57;border-radius:4.5px"></div>
<div class="a" style="left:1487px;top:318px;width:8px;height:175px;background:#5f7689;border-radius:4px"></div>
<svg class="a" style="left:1486px;top:497px;" width="9" height="6" viewBox="0 0 9 6"><path d="M0.5 0.5 L4.5 5 L8.5 0.5 Z" fill="#56636f"/></svg>
<div class="a" style="left:808px;top:511px;width:26px;height:17px;background:#445464;border-radius:0 0 3px 3px"></div>
<div class="a" style="left:836px;top:511px;width:83px;height:17px;background:#445464;border-radius:0 0 3px 3px"></div>
<div class="a" style="left:920px;top:511px;width:28px;height:17px;background:#54687a;border-radius:0 0 3px 3px"></div>
<div class="a" style="left:920px;top:510px;width:28px;height:2px;background:#259ae9;"></div>
<div class="a" style="left:949px;top:511px;width:27px;height:17px;background:#445464;border-radius:0 0 3px 3px"></div>
<div class="a t" style="left:810.83px;top:514.82px;font-size:11.2px;line-height:11.2px;font-family:'Liberation Sans',sans-serif;color:#e0e1e3;transform:scaleX(0.9091);transform-origin:0 0;">Help</div>
<div class="a t" style="left:838.03px;top:514.82px;font-size:11.2px;line-height:11.2px;font-family:'Liberation Sans',sans-serif;color:#e0e1e3;transform:scaleX(0.9110);transform-origin:0 0;">Variable Explorer</div>
<div class="a t" style="left:923.03px;top:514.82px;font-size:11.2px;line-height:11.2px;font-family:'Liberation Sans',sans-serif;color:#e0e1e3;transform:scaleX(0.9010);transform-origin:0 0;">Plots</div>
<div class="a t" style="left:952.03px;top:514.82px;font-size:11.2px;line-height:11.2px;font-family:'Liberation Sans',sans-serif;color:#e0e1e3;transform:scaleX(0.8977);transform-origin:0 0;">Files</div>
<div class="a" style="left:283px;top:529px;width:1217px;height:6px;background:#445464;"></div>
<div class="a" style="left:283px;top:535px;width:1217px;height:241px;background:#17212a;"></div>
<svg class="a" style="left:292px;top:545px;" width="16" height="13" viewBox="0 0 16 13"><rect x="1" y="1" width="13" height="10.5" rx="1.2" fill="none" stroke="#f5f6f7" stroke-width="1.6"/><rect x="8" y="1" width="6" height="3" fill="#f5f6f7"/></svg>
<div class="a" style="left:318px;top:545px;width:83px;height:23px;background:#54687a;border-radius:3px 3px 0 0"></div>
<div class="a" style="left:318px;top:566px;width:83px;height:3px;background:#259ae9;"></div>
<div class="a t" style="left:325.48px;top:550.84px;font-size:12px;line-height:12px;font-family:'Liberation Sans',sans-serif;color:#e0e1e3;transform:scaleX(0.8321);transform-origin:0 0;">Console 2/A</div>
<svg class="a" style="left:385px;top:551px;" width="10" height="10" viewBox="0 0 10 10"><path d="M1 1 L9 9 M9 1 L1 9" stroke="#f5f6f7" stroke-width="1.4"/></svg>
<svg class="a" style="left:1407px;top:545px;" width="10" height="13" viewBox="0 0 10 13"><path d="M0.5 1.5 H8.5 V11 Q8.5 12 7.5 12 H1.5 Q0.5 12 0.5 11 Z" fill="#f5f6f7"/><rect x="7" y="3" width="2.5" height="8" fill="#c9ced3"/></svg>
<div class="a" style="left:1445px;top:548px;width:6px;height:6px;background:#8c949c;"></div>
<svg class="a" style="left:1480px;top:547px;" width="10" height="8" viewBox="0 0 10 8"><path d="M0.5 1 H9.5 M0.5 4 H9.5 M0.5 7 H9.5" stroke="#f5f6f7" stroke-width="1.2"/></svg>
<div class="a" style="left:284px;top:568px;width:1215px;height:188px;background:#17212a;border:1px solid #2b4257;border-radius:3px"></div>
<div class="a" style="left:285px;top:569px;width:1195px;height:186px;overflow:hidden">
<div class="a t" style="left:4.90px;top:-3.53px;font-size:11.4px;line-height:11.4px;font-family:'Liberation Mono',monospace;color:#e6e8ea;transform:scaleX(0.9143);transform-origin:0 0;-webkit-text-stroke:0.25px #e6e8ea;">11/11 [==============================] - 0s 4ms/step - loss: 1.4084 - accuracy: 0.4099 - val_loss: 1.3924 - val_accuracy: 0.4392</div>
<div class="a t" style="left:4.90px;top:10.47px;font-size:11.4px;line-height:11.4px;font-family:'Liberation Mono',monospace;color:#e6e8ea;transform:scaleX(0.9143);transform-origin:0 0;-webkit-text-stroke:0.25px #e6e8ea;">Epoch 28/40</div>
<div class="a t" style="left:4.90px;top:24.47px;font-size:11.4px;line-height:11.4px;font-family:'Liberation Mono',monospace;color:#e6e8ea;transform:scaleX(0.9143);transform-origin:0 0;-webkit-text-stroke:0.25px #e6e8ea;">11/11 [==============================] - 0s 4ms/step - loss: 1.3927 - accuracy: 0.4273 - val_loss: 1.3948 - val_accuracy: 0.4459</div>
<div class="a t" style="left:4.90px;top:38.47px;font-size:11.4px;line-height:11.4px;font-family:'Liberation Mono',monospace;color:#e6e8ea;transform:scaleX(0.9143);transform-origin:0 0;-webkit-text-stroke:0.25px #e6e8ea;">Epoch 29/40</div>
<div class="a t" style="left:4.90px;top:52.47px;font-size:11.4px;line-height:11.4px;font-family:'Liberation Mono',monospace;color:#e6e8ea;transform:scaleX(0.9143);transform-origin:0 0;-webkit-text-stroke:0.25px #e6e8ea;">11/11 [==============================] - 0s 5ms/step - loss: 1.3863 - accuracy: 0.4506 - val_loss: 1.3598 - val_accuracy: 0.4459</div>
<div class="a t" style="left:4.90px;top:66.47px;font-size:11.4px;line-height:11.4px;font-family:'Liberation Mono',monospace;color:#e6e8ea;transform:scaleX(0.9143);transform-origin:0 0;-webkit-text-stroke:0.25px #e6e8ea;">Epoch 30/40</div>
<div class="a t" style="left:4.90px;top:80.47px;font-size:11.4px;line-height:11.4px;font-family:'Liberation Mono',monospace;color:#e6e8ea;transform:scaleX(0.9143);transform-origin:0 0;-webkit-text-stroke:0.25px #e6e8ea;">11/11 [==============================] - 0s 4ms/step - loss: 1.3762 - accuracy: 0.4622 - val_loss: 1.3453 - val_accuracy: 0.4595</div>
<div class="a t" style="left:4.90px;top:94.47px;font-size:11.4px;line-height:11.4px;font-family:'Liberation Mono',monospace;color:#e6e8ea;transform:scaleX(0.9143);transform-origin:0 0;-webkit-text-stroke:0.25px #e6e8ea;">Epoch 31/40</div>
<div class="a t" style="left:4.90px;top:108.47px;font-size:11.4px;line-height:11.4px;font-family:'Liberation Mono',monospace;color:#e6e8ea;transform:scaleX(0.9143);transform-origin:0 0;-webkit-text-stroke:0.25px #e6e8ea;">11/11 [==============================] - 0s 4ms/step - loss: 1.3661 - accuracy: 0.4535 - val_loss: 1.3342 - val_accuracy: 0.4595</div>
<div class="a t" style="left:4.90px;top:122.47px;font-size:11.4px;line-height:11.4px;font-family:'Liberation Mono',monospace;color:#e6e8ea;transform:scaleX(0.9143);transform-origin:0 0;-webkit-text-stroke:0.25px #e6e8ea;">Epoch 32/40</div>
<div class="a t" style="left:4.90px;top:136.47px;font-size:11.4px;line-height:11.4px;font-family:'Liberation Mono',monospace;color:#e6e8ea;transform:scaleX(0.9143);transform-origin:0 0;-webkit-text-stroke:0.25px #e6e8ea;">11/11 [==============================] - 0s 4ms/step - loss: 1.3525 - accuracy: 0.4709 - val_loss: 1.3188 - val_accuracy: 0.4595</div>
<div class="a t" style="left:4.90px;top:150.47px;font-size:11.4px;line-height:11.4px;font-family:'Liberation Mono',monospace;color:#e6e8ea;transform:scaleX(0.9143);transform-origin:0 0;-webkit-text-stroke:0.25px #e6e8ea;">Epoch 33/40</div>
<div class="a t" style="left:4.90px;top:164.47px;font-size:11.4px;line-height:11.4px;font-family:'Liberation Mono',monospace;color:#e6e8ea;transform:scaleX(0.9143);transform-origin:0 0;-webkit-text-stroke:0.25px #e6e8ea;">11/11 [==============================] - 0s 4ms/step - loss: 1.3401 - accuracy: 0.4971 - val_loss: 1.3138 - val_accuracy: 0.4797</div>
<div class="a t" style="left:4.90px;top:178.47px;font-size:11.4px;line-height:11.4px;font-family:'Liberation Mono',monospace;color:#e6e8ea;transform:scaleX(0.9143);transform-origin:0 0;-webkit-text-stroke:0.25px #e6e8ea;">Epoch 34/40</div>
</div>
<svg class="a" style="left:1486px;top:575px;" width="9" height="6" viewBox="0 0 9 6"><path d="M0.5 5.5 L4.5 1 L8.5 5.5 Z" fill="#56636f"/></svg>
<div class="a" style="left:1486px;top:583px;width:9px;height:159px;background:transparent;border:1px solid #3d4a57;border-radius:4.5px"></div>
<div class="a" style="left:1487px;top:720px;width:7px;height:9px;background:#6d7f90;border-radius:4px"></div>
<svg class="a" style="left:1486px;top:744px;" width="9" height="6" viewBox="0 0 9 6"><path d="M0.5 0.5 L4.5 5 L8.5 0.5 Z" fill="#56636f"/></svg>
<div class="a" style="left:834px;top:757px;width:78px;height:18px;background:#54687a;border-radius:0 0 3px 3px"></div>
<div class="a" style="left:834px;top:756px;width:78px;height:3px;background:#259ae9;"></div>
<div class="a" style="left:913px;top:758px;width:37px;height:17px;background:#445464;border-radius:0 0 3px 3px"></div>
<div class="a t" style="left:837.29px;top:762.21px;font-size:11.8px;line-height:11.8px;font-family:'Liberation Sans',sans-serif;color:#e0e1e3;transform:scaleX(0.8245);transform-origin:0 0;">IPython Console</div>
<div class="a t" style="left:916.29px;top:762.21px;font-size:11.8px;line-height:11.8px;font-family:'Liberation Sans',sans-serif;color:#e0e1e3;transform:scaleX(0.8557);transform-origin:0 0;">History</div>
<div class="a" style="left:0px;top:776px;width:1500px;height:21px;background:#445464;"></div>
<div class="a" style="left:0px;top:797px;width:1500px;height:10px;background:#202122;"></div>
<div class="a" style="left:457px;top:803px;width:200px;height:8px;background:#2c2d2e;border-radius:5px"></div>
<div class="a" style="left:1013px;top:800px;width:38px;height:10px;background:#2a2b2c;border-radius:4px"></div>
<div class="a" style="left:1078px;top:804px;width:11px;height:10px;background:#e0604a;border-radius:50%"></div>
<div class="a t" style="left:955.94px;top:781.69px;font-size:11px;line-height:11px;font-family:'Liberation Sans',sans-serif;color:#e0e1e3;transform:scaleX(0.9194);transform-origin:0 0;">conda (Python 3.10.9)</div>
<div class="a t" style="left:1082.34px;top:781.69px;font-size:11px;line-height:11px;font-family:'Liberation Sans',sans-serif;color:#e0e1e3;transform:scaleX(0.9145);transform-origin:0 0;">Completions: conda</div>
<div class="a t" style="left:1198.34px;top:781.69px;font-size:11px;line-height:11px;font-family:'Liberation Sans',sans-serif;color:#e0e1e3;transform:scaleX(0.8810);transform-origin:0 0;">LSP: Python</div>
<div class="a t" style="left:1264.64px;top:781.69px;font-size:11px;line-height:11px;font-family:'Liberation Sans',sans-serif;color:#e0e1e3;transform:scaleX(0.8972);transform-origin:0 0;">Line 55, Col 17</div>
<div class="a t" style="left:1343.34px;top:781.69px;font-size:11px;line-height:11px;font-family:'Liberation Sans',sans-serif;color:#e0e1e3;transform:scaleX(0.8617);transform-origin:0 0;">UTF-8</div>
<div class="a t" style="left:1383.34px;top:781.69px;font-size:11px;line-height:11px;font-family:'Liberation Sans',sans-serif;color:#e0e1e3;transform:scaleX(0.7932);transform-origin:0 0;">CRLF</div>
<div class="a t" style="left:1418.34px;top:781.69px;font-size:11px;line-height:11px;font-family:'Liberation Sans',sans-serif;color:#e0e1e3;transform:scaleX(0.8753);transform-origin:0 0;">RW</div>
<div class="a t" style="left:1449.34px;top:781.69px;font-size:11px;line-height:11px;font-family:'Liberation Sans',sans-serif;color:#e0e1e3;transform:scaleX(0.9273);transform-origin:0 0;">Mem 86%</div>
<svg class="a" style="left:1065px;top:782px;" width="12" height="11" viewBox="0 0 12 11"><path d="M3 1.5 L5.5 4 L3 6.5 L0.5 4 Z" fill="none" stroke="#f5f6f7" stroke-width="1.1"/><path d="M5 9.5 L8 6.5 L11 9.5" fill="none" stroke="#f5f6f7" stroke-width="1.3"/><path d="M7.5 1 L10 3.5" stroke="#f5f6f7" stroke-width="1.2"/></svg>
<svg class="a" style="left:1182px;top:784px;" width="10" height="8" viewBox="0 0 10 8"><path d="M0.8 4 L3.6 6.8 L9.2 1" fill="none" stroke="#f5f6f7" stroke-width="1.3"/></svg>
<svg class="a" style="left:556px;top:127px" width="528" height="373" viewBox="0 0 528 373" font-family="Liberation Sans" fill="#333333"><rect x="0" y="0" width="528" height="373" fill="#ffffff"/>
<polyline points="89.30,259.40 99.80,256.60 110.30,288.50 120.80,308.20 131.30,299.30 141.80,233.30 152.30,259.00 162.80,227.60 173.30,220.10 183.80,220.10 194.30,225.20 204.80,219.60 215.30,225.20 225.80,221.60 236.30,222.30 246.80,218.20 257.30,215.90 267.80,216.20 278.30,210.00 288.80,206.40 299.30,199.10 309.80,182.80 320.30,170.50 330.80,160.30 341.30,150.70 351.80,137.60 362.30,135.90 372.80,124.20 383.30,110.00 393.80,101.60 404.30,107.50 414.80,96.60 425.30,79.00 435.80,63.10 446.30,82.40 456.80,68.20 467.30,73.50 477.80,59.00 488.30,47.20 498.80,43.90" fill="none" stroke="#3282bd" stroke-width="2.5" stroke-linejoin="round" stroke-linecap="square"/>
<polyline points="89.30,259.40 99.80,245.40 110.30,307.40 120.80,271.10 131.30,258.20 141.80,232.50 152.30,258.20 162.80,230.00 173.30,213.90 183.80,209.90 194.30,226.80 204.80,226.80 215.30,227.00 225.80,227.00 236.30,227.00 246.80,227.00 257.30,227.00 267.80,223.00 278.30,218.60 288.80,218.60 299.30,210.00 309.80,210.00 320.30,178.70 330.80,169.80 341.30,148.00 351.80,126.00 362.30,116.70 372.80,112.50 383.30,112.50 393.80,103.30 404.30,103.30 414.80,104.10 425.30,90.70 435.80,99.60 446.30,85.70 456.80,90.70 467.30,74.00 477.80,65.60 488.30,60.10 498.80,81.90" fill="none" stroke="#fd8f2c" stroke-width="2.5" stroke-linejoin="round" stroke-linecap="square"/>
<rect x="68.30" y="30.60" width="450.70" height="293.00" fill="none" stroke="#3c3c3c" stroke-width="1.4"/>
<path d="M63.80 307.80 H68.30" stroke="#3c3c3c" stroke-width="1.3"/>
<text x="0.00" y="0.00" font-size="15.6" text-anchor="end" transform="translate(57.60,313.10) scale(0.9,1)">0.15</text>
<path d="M63.80 274.95 H68.30" stroke="#3c3c3c" stroke-width="1.3"/>
<text x="0.00" y="0.00" font-size="15.6" text-anchor="end" transform="translate(57.60,280.25) scale(0.9,1)">0.20</text>
<path d="M63.80 242.10 H68.30" stroke="#3c3c3c" stroke-width="1.3"/>
<text x="0.00" y="0.00" font-size="15.6" text-anchor="end" transform="translate(57.60,247.40) scale(0.9,1)">0.25</text>
<path d="M63.80 209.25 H68.30" stroke="#3c3c3c" stroke-width="1.3"/>
<text x="0.00" y="0.00" font-size="15.6" text-anchor="end" transform="translate(57.60,214.55) scale(0.9,1)">0.30</text>
<path d="M63.80 176.40 H68.30" stroke="#3c3c3c" stroke-width="1.3"/>
<text x="0.00" y="0.00" font-size="15.6" text-anchor="end" transform="translate(57.60,181.70) scale(0.9,1)">0.35</text>
<path d="M63.80 143.55 H68.30" stroke="#3c3c3c" stroke-width="1.3"/>
<text x="0.00" y="0.00" font-size="15.6" text-anchor="end" transform="translate(57.60,148.85) scale(0.9,1)">0.40</text>
<path d="M63.80 110.70 H68.30" stroke="#3c3c3c" stroke-width="1.3"/>
<text x="0.00" y="0.00" font-size="15.6" text-anchor="end" transform="translate(57.60,116.00) scale(0.9,1)">0.45</text>
<path d="M63.80 77.85 H68.30" stroke="#3c3c3c" stroke-width="1.3"/>
<text x="0.00" y="0.00" font-size="15.6" text-anchor="end" transform="translate(57.60,83.15) scale(0.9,1)">0.50</text>
<path d="M63.80 45.00 H68.30" stroke="#3c3c3c" stroke-width="1.3"/>
<text x="0.00" y="0.00" font-size="15.6" text-anchor="end" transform="translate(57.60,50.30) scale(0.9,1)">0.55</text>
<path d="M89.30 323.60 V328.10" stroke="#3c3c3c" stroke-width="1.3"/>
<text x="0.00" y="0.00" font-size="15.6" text-anchor="middle" transform="translate(89.30,344.60) scale(0.9,1)">0</text>
<path d="M141.80 323.60 V328.10" stroke="#3c3c3c" stroke-width="1.3"/>
<text x="0.00" y="0.00" font-size="15.6" text-anchor="middle" transform="translate(141.80,344.60) scale(0.9,1)">5</text>
<path d="M194.30 323.60 V328.10" stroke="#3c3c3c" stroke-width="1.3"/>
<text x="0.00" y="0.00" font-size="15.6" text-anchor="middle" transform="translate(194.30,344.60) scale(0.9,1)">10</text>
<path d="M246.80 323.60 V328.10" stroke="#3c3c3c" stroke-width="1.3"/>
<text x="0.00" y="0.00" font-size="15.6" text-anchor="middle" transform="translate(246.80,344.60) scale(0.9,1)">15</text>
<path d="M299.30 323.60 V328.10" stroke="#3c3c3c" stroke-width="1.3"/>
<text x="0.00" y="0.00" font-size="15.6" text-anchor="middle" transform="translate(299.30,344.60) scale(0.9,1)">20</text>
<path d="M351.80 323.60 V328.10" stroke="#3c3c3c" stroke-width="1.3"/>
<text x="0.00" y="0.00" font-size="15.6" text-anchor="middle" transform="translate(351.80,344.60) scale(0.9,1)">25</text>
<path d="M404.30 323.60 V328.10" stroke="#3c3c3c" stroke-width="1.3"/>
<text x="0.00" y="0.00" font-size="15.6" text-anchor="middle" transform="translate(404.30,344.60) scale(0.9,1)">30</text>
<path d="M456.80 323.60 V328.10" stroke="#3c3c3c" stroke-width="1.3"/>
<text x="0.00" y="0.00" font-size="15.6" text-anchor="middle" transform="translate(456.80,344.60) scale(0.9,1)">35</text>
<path d="M509.30 323.60 V328.10" stroke="#3c3c3c" stroke-width="1.3"/>
<text x="0.00" y="0.00" font-size="15.6" text-anchor="middle" transform="translate(509.30,344.60) scale(0.9,1)">40</text>
<text x="292.50" y="23.30" font-size="17.8" text-anchor="middle">Train &amp; Test Accuracy</text>
<text x="0.00" y="0.00" font-size="15.6" text-anchor="middle" transform="translate(292.60,364.50) scale(0.94,1)">No. of Epoch</text>
<text transform="translate(20.60,179.40) rotate(-90) scale(0.93,1)" font-size="15.6" text-anchor="middle">Accuracy</text>
<rect x="365.30" y="272.60" width="146.9" height="43.7" rx="2.5" fill="#ffffff" fill-opacity="0.8" stroke="#d5d5d5" stroke-width="1"/>
<path d="M368.70 282.60 H398.20" stroke="#2d7fba" stroke-width="2.5"/>
<path d="M368.70 302.70 H398.20" stroke="#fd8a25" stroke-width="2.5"/>
<text x="0.00" y="0.00" font-size="15.6" text-anchor="start" transform="translate(409.00,289.60) scale(0.934,1)">Train Accuracy</text>
<text x="0.00" y="0.00" font-size="15.6" text-anchor="start" transform="translate(409.00,309.50) scale(0.925,1)">Test Accuracy</text>
<path transform="translate(258,32)" d="M0.5 0.5 V12 L3.3 9.3 L5.5 14 L7.3 13.2 L5.2 8.6 H9 Z" fill="#ffffff" stroke="#333" stroke-width="0.9"/></svg>
<div class="a" style="left:1365px;top:120px;width:120px;height:389px;overflow:hidden">
<svg class="a" style="left:3px;top:3px" width="114" height="18" viewBox="0 0 570 90" font-family="Liberation Sans" fill="#333"><rect width="570" height="90" fill="#fff"/><path d="M60 0 V47.5 H560" fill="none" stroke="#999" stroke-width="2.5"/><polyline points="85.0,0.0 72.5,32.5" fill="none" stroke="#4a90c0" stroke-width="2.5"/><circle cx="72.5" cy="32.5" r="4.5" fill="#4a90c0"/><text x="100.0" y="66.5" font-size="13.8" text-anchor="middle" stroke="#555" stroke-width="0.25">2.5</text><text x="163.5" y="66.5" font-size="13.8" text-anchor="middle" stroke="#555" stroke-width="0.25">5.0</text><text x="227.0" y="66.5" font-size="13.8" text-anchor="middle" stroke="#555" stroke-width="0.25">7.5</text><text x="290.5" y="66.5" font-size="13.8" text-anchor="middle" stroke="#555" stroke-width="0.25">10.0</text><text x="354.0" y="66.5" font-size="13.8" text-anchor="middle" stroke="#555" stroke-width="0.25">12.5</text><text x="417.5" y="66.5" font-size="13.8" text-anchor="middle" stroke="#555" stroke-width="0.25">15.0</text><text x="481.0" y="66.5" font-size="13.8" text-anchor="middle" stroke="#555" stroke-width="0.25">17.5</text><text x="544.5" y="66.5" font-size="13.8" text-anchor="middle" stroke="#555" stroke-width="0.25">20.0</text><text x="310.0" y="82.5" font-size="13.8" text-anchor="middle" stroke="#555" stroke-width="0.25">Number of components</text></svg>
<svg class="a" style="left:3px;top:25px" width="114" height="87" viewBox="0 0 570 435" font-family="Liberation Sans" fill="#333"><rect width="570" height="435" fill="#fff"/><rect x="60.5" y="22.5" width="499.5" height="386.5" fill="none" stroke="#999" stroke-width="2.25"/><polyline points="80.5,39.5 148.0,308.5 213.0,358.5 278.0,374.0 342.5,382.0 407.5,385.0 475.0,387.5 540.0,389.5" fill="none" stroke="#3d85b8" stroke-width="2.75"/><circle cx="80.5" cy="39.5" r="4.0" fill="#3d85b8"/><circle cx="148.0" cy="308.5" r="4.0" fill="#3d85b8"/><circle cx="213.0" cy="358.5" r="4.0" fill="#3d85b8"/><circle cx="278.0" cy="374.0" r="4.0" fill="#3d85b8"/><circle cx="342.5" cy="382.0" r="4.0" fill="#3d85b8"/><circle cx="407.5" cy="385.0" r="4.0" fill="#3d85b8"/><circle cx="475.0" cy="387.5" r="4.0" fill="#3d85b8"/><circle cx="540.0" cy="389.5" r="4.0" fill="#3d85b8"/><text x="52.5" y="69.0" font-size="12.5" text-anchor="end" stroke="#555" stroke-width="0.25">600000</text><text x="52.5" y="125.5" font-size="12.5" text-anchor="end" stroke="#555" stroke-width="0.25">500000</text><text x="52.5" y="181.5" font-size="12.5" text-anchor="end" stroke="#555" stroke-width="0.25">400000</text><text x="52.5" y="235.5" font-size="12.5" text-anchor="end" stroke="#555" stroke-width="0.25">300000</text><text x="52.5" y="289.0" font-size="12.5" text-anchor="end" stroke="#555" stroke-width="0.25">200000</text><text x="52.5" y="342.5" font-size="12.5" text-anchor="end" stroke="#555" stroke-width="0.25">100000</text><text x="52.5" y="399.0" font-size="12.5" text-anchor="end" stroke="#555" stroke-width="0.25">0</text><text x="80.5" y="425.0" font-size="12.5" text-anchor="middle" stroke="#555" stroke-width="0.25">1</text><text x="148.0" y="425.0" font-size="12.5" text-anchor="middle" stroke="#555" stroke-width="0.25">2</text><text x="213.0" y="425.0" font-size="12.5" text-anchor="middle" stroke="#555" stroke-width="0.25">3</text><text x="278.0" y="425.0" font-size="12.5" text-anchor="middle" stroke="#555" stroke-width="0.25">4</text><text x="342.5" y="425.0" font-size="12.5" text-anchor="middle" stroke="#555" stroke-width="0.25">5</text><text x="407.5" y="425.0" font-size="12.5" text-anchor="middle" stroke="#555" stroke-width="0.25">6</text><text x="475.0" y="425.0" font-size="12.5" text-anchor="middle" stroke="#555" stroke-width="0.25">7</text><text x="540.0" y="425.0" font-size="12.5" text-anchor="middle" stroke="#555" stroke-width="0.25">8</text><text x="310.0" y="16.0" font-size="14.4" text-anchor="middle" stroke="#555" stroke-width="0.25">Inertia with PCA Scaling</text><text x="310.0" y="435.0" font-size="12.5" text-anchor="middle" stroke="#555" stroke-width="0.25">Number of Clusters (k)</text><text transform="translate(15,225) rotate(-90)" font-size="10" text-anchor="middle">SSE</text></svg>
<svg class="a" style="left:3px;top:117px" width="114" height="99" viewBox="0 0 570 495" font-family="Liberation Sans" fill="#333"><rect width="570" height="495" fill="#fff"/><rect x="277.5" y="13.0" width="60.0" height="2.5" fill="#aaa"/><rect x="267.5" y="19.2" width="70.0" height="2.5" fill="#aaa"/><rect x="137.5" y="25.5" width="200.0" height="2.5" fill="#aaa"/><rect x="307.5" y="31.8" width="30.0" height="2.5" fill="#777"/><rect x="317.5" y="38.0" width="20.0" height="2.5" fill="#aaa"/><rect x="307.5" y="44.2" width="30.0" height="2.5" fill="#aaa"/><rect x="287.5" y="50.5" width="50.0" height="2.5" fill="#aaa"/><rect x="237.5" y="56.8" width="100.0" height="2.5" fill="#aaa"/><rect x="7.5" y="63.0" width="330.0" height="2.5" fill="#777"/><rect x="137.5" y="69.2" width="200.0" height="2.5" fill="#aaa"/><rect x="227.5" y="75.5" width="110.0" height="2.5" fill="#aaa"/><rect x="157.5" y="81.8" width="180.0" height="2.5" fill="#aaa"/><rect x="267.5" y="88.0" width="70.0" height="2.5" fill="#aaa"/><rect x="107.5" y="94.2" width="230.0" height="2.5" fill="#aaa"/><rect x="187.5" y="100.5" width="150.0" height="2.5" fill="#aaa"/><rect x="147.5" y="106.8" width="190.0" height="2.5" fill="#aaa"/><rect x="227.5" y="113.0" width="110.0" height="2.5" fill="#aaa"/><rect x="87.5" y="119.2" width="250.0" height="2.5" fill="#777"/><rect x="137.5" y="125.5" width="200.0" height="2.5" fill="#aaa"/><rect x="247.5" y="131.8" width="90.0" height="2.5" fill="#aaa"/><rect x="187.5" y="138.0" width="150.0" height="2.5" fill="#aaa"/><rect x="207.5" y="144.2" width="130.0" height="2.5" fill="#aaa"/><rect x="347.5" y="12.5" width="15.0" height="12.5" fill="#c5345a"/><rect x="347.5" y="12.5" width="15.0" height="12.5" fill="#6a1a52"/><rect x="347.5" y="31.0" width="15.0" height="8.0" fill="#c5345a"/><rect x="347.5" y="31.0" width="15.0" height="8.0" fill="#d54a52"/><rect x="347.5" y="47.5" width="15.0" height="55.0" fill="#c5345a"/><rect x="347.5" y="47.5" width="15.0" height="9.2" fill="#6a1a52"/><rect x="347.5" y="56.7" width="15.0" height="9.2" fill="#6a1a52"/><rect x="347.5" y="65.8" width="15.0" height="9.2" fill="#d54a52"/><rect x="347.5" y="75.0" width="15.0" height="9.2" fill="#c0305a"/><rect x="347.5" y="84.2" width="15.0" height="9.2" fill="#e05a55"/><rect x="347.5" y="93.3" width="15.0" height="9.2" fill="#b22c5c"/><rect x="347.5" y="109.0" width="15.0" height="45.0" fill="#c5345a"/><rect x="347.5" y="109.0" width="15.0" height="9.0" fill="#d54a52"/><rect x="347.5" y="118.0" width="15.0" height="9.0" fill="#6a1a52"/><rect x="347.5" y="127.0" width="15.0" height="9.0" fill="#c0305a"/><rect x="347.5" y="136.0" width="15.0" height="9.0" fill="#c0305a"/><rect x="347.5" y="145.0" width="15.0" height="9.0" fill="#b22c5c"/><rect x="385.0" y="12.5" width="7.5" height="12.5" fill="#c5345a"/><rect x="385.0" y="12.5" width="7.5" height="12.5" fill="#cf3f55"/><rect x="385.0" y="31.0" width="7.5" height="8.0" fill="#c5345a"/><rect x="385.0" y="31.0" width="7.5" height="8.0" fill="#6a1a52"/><rect x="385.0" y="47.5" width="7.5" height="55.0" fill="#c5345a"/><rect x="385.0" y="47.5" width="7.5" height="9.2" fill="#8a2258"/><rect x="385.0" y="56.7" width="7.5" height="9.2" fill="#b22c5c"/><rect x="385.0" y="65.8" width="7.5" height="9.2" fill="#cf3f55"/><rect x="385.0" y="75.0" width="7.5" height="9.2" fill="#d54a52"/><rect x="385.0" y="84.2" width="7.5" height="9.2" fill="#c0305a"/><rect x="385.0" y="93.3" width="7.5" height="9.2" fill="#c0305a"/><rect x="385.0" y="109.0" width="7.5" height="45.0" fill="#c5345a"/><rect x="385.0" y="109.0" width="7.5" height="9.0" fill="#c0305a"/><rect x="385.0" y="118.0" width="7.5" height="9.0" fill="#f28a62"/><rect x="385.0" y="127.0" width="7.5" height="9.0" fill="#6a1a52"/><rect x="385.0" y="136.0" width="7.5" height="9.0" fill="#c0305a"/><rect x="385.0" y="145.0" width="7.5" height="9.0" fill="#c0305a"/><rect x="402.5" y="12.5" width="65.0" height="12.5" fill="#c5345a"/><rect x="402.5" y="12.5" width="8.1" height="12.5" fill="#c0305a"/><rect x="410.6" y="12.5" width="8.1" height="12.5" fill="#b22c5c"/><rect x="418.8" y="12.5" width="8.1" height="12.5" fill="#c0305a"/><rect x="426.9" y="12.5" width="8.1" height="12.5" fill="#c0305a"/><rect x="435.0" y="12.5" width="8.1" height="12.5" fill="#d54a52"/><rect x="443.1" y="12.5" width="8.1" height="12.5" fill="#cf3f55"/><rect x="451.2" y="12.5" width="8.1" height="12.5" fill="#c0305a"/><rect x="459.4" y="12.5" width="8.1" height="12.5" fill="#c0305a"/><rect x="402.5" y="31.0" width="65.0" height="8.0" fill="#c5345a"/><rect x="402.5" y="31.0" width="8.1" height="8.0" fill="#e05a55"/><rect x="410.6" y="31.0" width="8.1" height="8.0" fill="#e05a55"/><rect x="418.8" y="31.0" width="8.1" height="8.0" fill="#c0305a"/><rect x="426.9" y="31.0" width="8.1" height="8.0" fill="#c0305a"/><rect x="435.0" y="31.0" width="8.1" height="8.0" fill="#6a1a52"/><rect x="443.1" y="31.0" width="8.1" height="8.0" fill="#c83856"/><rect x="451.2" y="31.0" width="8.1" height="8.0" fill="#6a1a52"/><rect x="459.4" y="31.0" width="8.1" height="8.0" fill="#c0305a"/><rect x="402.5" y="47.5" width="65.0" height="55.0" fill="#c5345a"/><rect x="402.5" y="47.5" width="8.1" height="9.2" fill="#e05a55"/><rect x="402.5" y="56.7" width="8.1" height="9.2" fill="#d54a52"/><rect x="402.5" y="65.8" width="8.1" height="9.2" fill="#e05a55"/><rect x="402.5" y="75.0" width="8.1" height="9.2" fill="#c0305a"/><rect x="402.5" y="84.2" width="8.1" height="9.2" fill="#8a2258"/><rect x="402.5" y="93.3" width="8.1" height="9.2" fill="#6a1a52"/><rect x="410.6" y="47.5" width="8.1" height="9.2" fill="#c0305a"/><rect x="410.6" y="56.7" width="8.1" height="9.2" fill="#c0305a"/><rect x="410.6" y="65.8" width="8.1" height="9.2" fill="#cf3f55"/><rect x="410.6" y="75.0" width="8.1" height="9.2" fill="#6a1a52"/><rect x="410.6" y="84.2" width="8.1" height="9.2" fill="#c0305a"/><rect x="410.6" y="93.3" width="8.1" height="9.2" fill="#8a2258"/><rect x="418.8" y="47.5" width="8.1" height="9.2" fill="#f28a62"/><rect x="418.8" y="56.7" width="8.1" height="9.2" fill="#d54a52"/><rect x="418.8" y="65.8" width="8.1" height="9.2" fill="#cf3f55"/><rect x="418.8" y="75.0" width="8.1" height="9.2" fill="#8a2258"/><rect x="418.8" y="84.2" width="8.1" height="9.2" fill="#c83856"/><rect x="418.8" y="93.3" width="8.1" height="9.2" fill="#e05a55"/><rect x="426.9" y="47.5" width="8.1" height="9.2" fill="#d54a52"/><rect x="426.9" y="56.7" width="8.1" height="9.2" fill="#8a2258"/><rect x="426.9" y="65.8" width="8.1" height="9.2" fill="#c0305a"/><rect x="426.9" y="75.0" width="8.1" height="9.2" fill="#cf3f55"/><rect x="426.9" y="84.2" width="8.1" height="9.2" fill="#c0305a"/><rect x="426.9" y="93.3" width="8.1" height="9.2" fill="#cf3f55"/><rect x="435.0" y="47.5" width="8.1" height="9.2" fill="#f28a62"/><rect x="435.0" y="56.7" width="8.1" height="9.2" fill="#cf3f55"/><rect x="435.0" y="65.8" width="8.1" height="9.2" fill="#8a2258"/><rect x="435.0" y="75.0" width="8.1" height="9.2" fill="#f28a62"/><rect x="435.0" y="84.2" width="8.1" height="9.2" fill="#cf3f55"/><rect x="435.0" y="93.3" width="8.1" height="9.2" fill="#c0305a"/><rect x="443.1" y="47.5" width="8.1" height="9.2" fill="#c0305a"/><rect x="443.1" y="56.7" width="8.1" height="9.2" fill="#c0305a"/><rect x="443.1" y="65.8" width="8.1" height="9.2" fill="#e05a55"/><rect x="443.1" y="75.0" width="8.1" height="9.2" fill="#e05a55"/><rect x="443.1" y="84.2" width="8.1" height="9.2" fill="#c0305a"/><rect x="443.1" y="93.3" width="8.1" height="9.2" fill="#6a1a52"/><rect x="451.2" y="47.5" width="8.1" height="9.2" fill="#f28a62"/><rect x="451.2" y="56.7" width="8.1" height="9.2" fill="#f28a62"/><rect x="451.2" y="65.8" width="8.1" height="9.2" fill="#f28a62"/><rect x="451.2" y="75.0" width="8.1" height="9.2" fill="#cf3f55"/><rect x="451.2" y="84.2" width="8.1" height="9.2" fill="#c0305a"/><rect x="451.2" y="93.3" width="8.1" height="9.2" fill="#c0305a"/><rect x="459.4" y="47.5" width="8.1" height="9.2" fill="#e05a55"/><rect x="459.4" y="56.7" width="8.1" height="9.2" fill="#c0305a"/><rect x="459.4" y="65.8" width="8.1" height="9.2" fill="#8a2258"/><rect x="459.4" y="75.0" width="8.1" height="9.2" fill="#c83856"/><rect x="459.4" y="84.2" width="8.1" height="9.2" fill="#cf3f55"/><rect x="459.4" y="93.3" width="8.1" height="9.2" fill="#8a2258"/><rect x="402.5" y="109.0" width="65.0" height="45.0" fill="#c5345a"/><rect x="402.5" y="109.0" width="8.1" height="9.0" fill="#c83856"/><rect x="402.5" y="118.0" width="8.1" height="9.0" fill="#c0305a"/><rect x="402.5" y="127.0" width="8.1" height="9.0" fill="#f28a62"/><rect x="402.5" y="136.0" width="8.1" height="9.0" fill="#cf3f55"/><rect x="402.5" y="145.0" width="8.1" height="9.0" fill="#b22c5c"/><rect x="410.6" y="109.0" width="8.1" height="9.0" fill="#e05a55"/><rect x="410.6" y="118.0" width="8.1" height="9.0" fill="#cf3f55"/><rect x="410.6" y="127.0" width="8.1" height="9.0" fill="#c0305a"/><rect x="410.6" y="136.0" width="8.1" height="9.0" fill="#c0305a"/><rect x="410.6" y="145.0" width="8.1" height="9.0" fill="#6a1a52"/><rect x="418.8" y="109.0" width="8.1" height="9.0" fill="#6a1a52"/><rect x="418.8" y="118.0" width="8.1" height="9.0" fill="#b22c5c"/><rect x="418.8" y="127.0" width="8.1" height="9.0" fill="#c0305a"/><rect x="418.8" y="136.0" width="8.1" height="9.0" fill="#d54a52"/><rect x="418.8" y="145.0" width="8.1" height="9.0" fill="#e05a55"/><rect x="426.9" y="109.0" width="8.1" height="9.0" fill="#6a1a52"/><rect x="426.9" y="118.0" width="8.1" height="9.0" fill="#d54a52"/><rect x="426.9" y="127.0" width="8.1" height="9.0" fill="#e05a55"/><rect x="426.9" y="136.0" width="8.1" height="9.0" fill="#b22c5c"/><rect x="426.9" y="145.0" width="8.1" height="9.0" fill="#f28a62"/><rect x="435.0" y="109.0" width="8.1" height="9.0" fill="#c0305a"/><rect x="435.0" y="118.0" width="8.1" height="9.0" fill="#f28a62"/><rect x="435.0" y="127.0" width="8.1" height="9.0" fill="#cf3f55"/><rect x="435.0" y="136.0" width="8.1" height="9.0" fill="#f28a62"/><rect x="435.0" y="145.0" width="8.1" height="9.0" fill="#f28a62"/><rect x="443.1" y="109.0" width="8.1" height="9.0" fill="#e05a55"/><rect x="443.1" y="118.0" width="8.1" height="9.0" fill="#c0305a"/><rect x="443.1" y="127.0" width="8.1" height="9.0" fill="#8a2258"/><rect x="443.1" y="136.0" width="8.1" height="9.0" fill="#c0305a"/><rect x="443.1" y="145.0" width="8.1" height="9.0" fill="#8a2258"/><rect x="451.2" y="109.0" width="8.1" height="9.0" fill="#c0305a"/><rect x="451.2" y="118.0" width="8.1" height="9.0" fill="#e05a55"/><rect x="451.2" y="127.0" width="8.1" height="9.0" fill="#b22c5c"/><rect x="451.2" y="136.0" width="8.1" height="9.0" fill="#f28a62"/><rect x="451.2" y="145.0" width="8.1" height="9.0" fill="#c0305a"/><rect x="459.4" y="109.0" width="8.1" height="9.0" fill="#c0305a"/><rect x="459.4" y="118.0" width="8.1" height="9.0" fill="#c0305a"/><rect x="459.4" y="127.0" width="8.1" height="9.0" fill="#cf3f55"/><rect x="459.4" y="136.0" width="8.1" height="9.0" fill="#c0305a"/><rect x="459.4" y="145.0" width="8.1" height="9.0" fill="#b22c5c"/><rect x="477.5" y="12.5" width="45.0" height="12.5" fill="#c5345a"/><rect x="477.5" y="12.5" width="9.0" height="12.5" fill="#e05a55"/><rect x="486.5" y="12.5" width="9.0" height="12.5" fill="#6a1a52"/><rect x="495.5" y="12.5" width="9.0" height="12.5" fill="#8a2258"/><rect x="504.5" y="12.5" width="9.0" height="12.5" fill="#c0305a"/><rect x="513.5" y="12.5" width="9.0" height="12.5" fill="#c0305a"/><rect x="477.5" y="31.0" width="45.0" height="8.0" fill="#c5345a"/><rect x="477.5" y="31.0" width="9.0" height="8.0" fill="#c83856"/><rect x="486.5" y="31.0" width="9.0" height="8.0" fill="#8a2258"/><rect x="495.5" y="31.0" width="9.0" height="8.0" fill="#f28a62"/><rect x="504.5" y="31.0" width="9.0" height="8.0" fill="#cf3f55"/><rect x="513.5" y="31.0" width="9.0" height="8.0" fill="#cf3f55"/><rect x="477.5" y="47.5" width="45.0" height="55.0" fill="#c5345a"/><rect x="477.5" y="47.5" width="9.0" height="9.2" fill="#cf3f55"/><rect x="477.5" y="56.7" width="9.0" height="9.2" fill="#e05a55"/><rect x="477.5" y="65.8" width="9.0" height="9.2" fill="#c0305a"/><rect x="477.5" y="75.0" width="9.0" height="9.2" fill="#c0305a"/><rect x="477.5" y="84.2" width="9.0" height="9.2" fill="#e05a55"/><rect x="477.5" y="93.3" width="9.0" height="9.2" fill="#c0305a"/><rect x="486.5" y="47.5" width="9.0" height="9.2" fill="#c0305a"/><rect x="486.5" y="56.7" width="9.0" height="9.2" fill="#c83856"/><rect x="486.5" y="65.8" width="9.0" height="9.2" fill="#c83856"/><rect x="486.5" y="75.0" width="9.0" height="9.2" fill="#c0305a"/><rect x="486.5" y="84.2" width="9.0" height="9.2" fill="#6a1a52"/><rect x="486.5" y="93.3" width="9.0" height="9.2" fill="#b22c5c"/><rect x="495.5" y="47.5" width="9.0" height="9.2" fill="#c0305a"/><rect x="495.5" y="56.7" width="9.0" height="9.2" fill="#6a1a52"/><rect x="495.5" y="65.8" width="9.0" height="9.2" fill="#c0305a"/><rect x="495.5" y="75.0" width="9.0" height="9.2" fill="#b22c5c"/><rect x="495.5" y="84.2" width="9.0" height="9.2" fill="#f28a62"/><rect x="495.5" y="93.3" width="9.0" height="9.2" fill="#b22c5c"/><rect x="504.5" y="47.5" width="9.0" height="9.2" fill="#c0305a"/><rect x="504.5" y="56.7" width="9.0" height="9.2" fill="#b22c5c"/><rect x="504.5" y="65.8" width="9.0" height="9.2" fill="#8a2258"/><rect x="504.5" y="75.0" width="9.0" height="9.2" fill="#e05a55"/><rect x="504.5" y="84.2" width="9.0" height="9.2" fill="#c0305a"/><rect x="504.5" y="93.3" width="9.0" height="9.2" fill="#e05a55"/><rect x="513.5" y="47.5" width="9.0" height="9.2" fill="#e05a55"/><rect x="513.5" y="56.7" width="9.0" height="9.2" fill="#b22c5c"/><rect x="513.5" y="65.8" width="9.0" height="9.2" fill="#c0305a"/><rect x="513.5" y="75.0" width="9.0" height="9.2" fill="#d54a52"/><rect x="513.5" y="84.2" width="9.0" height="9.2" fill="#e05a55"/><rect x="513.5" y="93.3" width="9.0" height="9.2" fill="#c0305a"/><rect x="477.5" y="109.0" width="45.0" height="45.0" fill="#c5345a"/><rect x="477.5" y="109.0" width="9.0" height="9.0" fill="#f28a62"/><rect x="477.5" y="118.0" width="9.0" height="9.0" fill="#6a1a52"/><rect x="477.5" y="127.0" width="9.0" height="9.0" fill="#c0305a"/><rect x="477.5" y="136.0" width="9.0" height="9.0" fill="#cf3f55"/><rect x="477.5" y="145.0" width="9.0" height="9.0" fill="#f28a62"/><rect x="486.5" y="109.0" width="9.0" height="9.0" fill="#c0305a"/><rect x="486.5" y="118.0" width="9.0" height="9.0" fill="#cf3f55"/><rect x="486.5" y="127.0" width="9.0" height="9.0" fill="#cf3f55"/><rect x="486.5" y="136.0" width="9.0" height="9.0" fill="#c0305a"/><rect x="486.5" y="145.0" width="9.0" height="9.0" fill="#d54a52"/><rect x="495.5" y="109.0" width="9.0" height="9.0" fill="#8a2258"/><rect x="495.5" y="118.0" width="9.0" height="9.0" fill="#e05a55"/><rect x="495.5" y="127.0" width="9.0" height="9.0" fill="#f28a62"/><rect x="495.5" y="136.0" width="9.0" height="9.0" fill="#8a2258"/><rect x="495.5" y="145.0" width="9.0" height="9.0" fill="#f28a62"/><rect x="504.5" y="109.0" width="9.0" height="9.0" fill="#c0305a"/><rect x="504.5" y="118.0" width="9.0" height="9.0" fill="#6a1a52"/><rect x="504.5" y="127.0" width="9.0" height="9.0" fill="#8a2258"/><rect x="504.5" y="136.0" width="9.0" height="9.0" fill="#d54a52"/><rect x="504.5" y="145.0" width="9.0" height="9.0" fill="#b22c5c"/><rect x="513.5" y="109.0" width="9.0" height="9.0" fill="#cf3f55"/><rect x="513.5" y="118.0" width="9.0" height="9.0" fill="#b22c5c"/><rect x="513.5" y="127.0" width="9.0" height="9.0" fill="#e05a55"/><rect x="513.5" y="136.0" width="9.0" height="9.0" fill="#6a1a52"/><rect x="513.5" y="145.0" width="9.0" height="9.0" fill="#d54a52"/><path d="M350 25 L360 15 M405 50 L465 100 M480 110 L520 152.5" stroke="#f8e0d8" stroke-width="3.5"/><defs><linearGradient id="cb" x1="0" y1="0" x2="0" y2="1"><stop offset="0" stop-color="#faebd7"/><stop offset="0.35" stop-color="#f08a60"/><stop offset="0.65" stop-color="#b0305a"/><stop offset="1" stop-color="#1a0f30"/></linearGradient></defs><rect x="531.5" y="12.5" width="9.0" height="142.5" fill="url(#cb)"/><rect x="350.0" y="157.5" width="2.2" height="130.0" fill="#b0b0b0"/><rect x="359.5" y="157.5" width="2.2" height="60.0" fill="#b0b0b0"/><rect x="369.0" y="157.5" width="2.2" height="150.0" fill="#b0b0b0"/><rect x="378.5" y="157.5" width="2.2" height="40.0" fill="#b0b0b0"/><rect x="388.0" y="157.5" width="2.2" height="200.0" fill="#777"/><rect x="397.5" y="157.5" width="2.2" height="70.0" fill="#b0b0b0"/><rect x="407.0" y="157.5" width="2.2" height="230.0" fill="#b0b0b0"/><rect x="416.5" y="157.5" width="2.2" height="100.0" fill="#b0b0b0"/><rect x="426.0" y="157.5" width="2.2" height="280.0" fill="#b0b0b0"/><rect x="435.5" y="157.5" width="2.2" height="190.0" fill="#777"/><rect x="445.0" y="157.5" width="2.2" height="150.0" fill="#b0b0b0"/><rect x="454.5" y="157.5" width="2.2" height="90.0" fill="#b0b0b0"/><rect x="464.0" y="157.5" width="2.2" height="210.0" fill="#b0b0b0"/><rect x="473.5" y="157.5" width="2.2" height="120.0" fill="#b0b0b0"/><rect x="483.0" y="157.5" width="2.2" height="250.0" fill="#b0b0b0"/><rect x="492.5" y="157.5" width="2.2" height="130.0" fill="#b0b0b0"/><rect x="502.0" y="157.5" width="2.2" height="160.0" fill="#b0b0b0"/><rect x="511.5" y="157.5" width="2.2" height="220.0" fill="#b0b0b0"/></svg>
<div class="a" style="left:3px;top:219px;width:114px;height:81px;background:#1565a8"></div>
<svg class="a" style="left:5px;top:221px" width="110" height="77" viewBox="0 0 528 373" preserveAspectRatio="none" font-family="Liberation Sans" fill="#262626"><rect x="0" y="0" width="528" height="373" fill="#ffffff"/>
<polyline points="89.30,259.40 99.80,256.60 110.30,288.50 120.80,308.20 131.30,299.30 141.80,233.30 152.30,259.00 162.80,227.60 173.30,220.10 183.80,220.10 194.30,225.20 204.80,219.60 215.30,225.20 225.80,221.60 236.30,222.30 246.80,218.20 257.30,215.90 267.80,216.20 278.30,210.00 288.80,206.40 299.30,199.10 309.80,182.80 320.30,170.50 330.80,160.30 341.30,150.70 351.80,137.60 362.30,135.90 372.80,124.20 383.30,110.00 393.80,101.60 404.30,107.50 414.80,96.60 425.30,79.00 435.80,63.10 446.30,82.40 456.80,68.20 467.30,73.50 477.80,59.00 488.30,47.20 498.80,43.90" fill="none" stroke="#3282bd" stroke-width="4" stroke-linejoin="round" stroke-linecap="square"/>
<polyline points="89.30,259.40 99.80,245.40 110.30,307.40 120.80,271.10 131.30,258.20 141.80,232.50 152.30,258.20 162.80,230.00 173.30,213.90 183.80,209.90 194.30,226.80 204.80,226.80 215.30,227.00 225.80,227.00 236.30,227.00 246.80,227.00 257.30,227.00 267.80,223.00 278.30,218.60 288.80,218.60 299.30,210.00 309.80,210.00 320.30,178.70 330.80,169.80 341.30,148.00 351.80,126.00 362.30,116.70 372.80,112.50 383.30,112.50 393.80,103.30 404.30,103.30 414.80,104.10 425.30,90.70 435.80,99.60 446.30,85.70 456.80,90.70 467.30,74.00 477.80,65.60 488.30,60.10 498.80,81.90" fill="none" stroke="#fd8f2c" stroke-width="4" stroke-linejoin="round" stroke-linecap="square"/>
<rect x="68.30" y="30.60" width="450.70" height="293.00" fill="none" stroke="#3c3c3c" stroke-width="2.5"/>
<path d="M63.80 307.80 H68.30" stroke="#3c3c3c" stroke-width="1.3"/>
<text x="0.00" y="0.00" font-size="15.6" text-anchor="end" transform="translate(57.60,313.10) scale(0.9,1)">0.15</text>
<path d="M63.80 274.95 H68.30" stroke="#3c3c3c" stroke-width="1.3"/>
<text x="0.00" y="0.00" font-size="15.6" text-anchor="end" transform="translate(57.60,280.25) scale(0.9,1)">0.20</text>
<path d="M63.80 242.10 H68.30" stroke="#3c3c3c" stroke-width="1.3"/>
<text x="0.00" y="0.00" font-size="15.6" text-anchor="end" transform="translate(57.60,247.40) scale(0.9,1)">0.25</text>
<path d="M63.80 209.25 H68.30" stroke="#3c3c3c" stroke-width="1.3"/>
<text x="0.00" y="0.00" font-size="15.6" text-anchor="end" transform="translate(57.60,214.55) scale(0.9,1)">0.30</text>
<path d="M63.80 176.40 H68.30" stroke="#3c3c3c" stroke-width="1.3"/>
<text x="0.00" y="0.00" font-size="15.6" text-anchor="end" transform="translate(57.60,181.70) scale(0.9,1)">0.35</text>
<path d="M63.80 143.55 H68.30" stroke="#3c3c3c" stroke-width="1.3"/>
<text x="0.00" y="0.00" font-size="15.6" text-anchor="end" transform="translate(57.60,148.85) scale(0.9,1)">0.40</text>
<path d="M63.80 110.70 H68.30" stroke="#3c3c3c" stroke-width="1.3"/>
<text x="0.00" y="0.00" font-size="15.6" text-anchor="end" transform="translate(57.60,116.00) scale(0.9,1)">0.45</text>
<path d="M63.80 77.85 H68.30" stroke="#3c3c3c" stroke-width="1.3"/>
<text x="0.00" y="0.00" font-size="15.6" text-anchor="end" transform="translate(57.60,83.15) scale(0.9,1)">0.50</text>
<path d="M63.80 45.00 H68.30" stroke="#3c3c3c" stroke-width="1.3"/>
<text x="0.00" y="0.00" font-size="15.6" text-anchor="end" transform="translate(57.60,50.30) scale(0.9,1)">0.55</text>
<path d="M89.30 323.60 V328.10" stroke="#3c3c3c" stroke-width="1.3"/>
<text x="0.00" y="0.00" font-size="15.6" text-anchor="middle" transform="translate(89.30,344.60) scale(0.9,1)">0</text>
<path d="M141.80 323.60 V328.10" stroke="#3c3c3c" stroke-width="1.3"/>
<text x="0.00" y="0.00" font-size="15.6" text-anchor="middle" transform="translate(141.80,344.60) scale(0.9,1)">5</text>
<path d="M194.30 323.60 V328.10" stroke="#3c3c3c" stroke-width="1.3"/>
<text x="0.00" y="0.00" font-size="15.6" text-anchor="middle" transform="translate(194.30,344.60) scale(0.9,1)">10</text>
<path d="M246.80 323.60 V328.10" stroke="#3c3c3c" stroke-width="1.3"/>
<text x="0.00" y="0.00" font-size="15.6" text-anchor="middle" transform="translate(246.80,344.60) scale(0.9,1)">15</text>
<path d="M299.30 323.60 V328.10" stroke="#3c3c3c" stroke-width="1.3"/>
<text x="0.00" y="0.00" font-size="15.6" text-anchor="middle" transform="translate(299.30,344.60) scale(0.9,1)">20</text>
<path d="M351.80 323.60 V328.10" stroke="#3c3c3c" stroke-width="1.3"/>
<text x="0.00" y="0.00" font-size="15.6" text-anchor="middle" transform="translate(351.80,344.60) scale(0.9,1)">25</text>
<path d="M404.30 323.60 V328.10" stroke="#3c3c3c" stroke-width="1.3"/>
<text x="0.00" y="0.00" font-size="15.6" text-anchor="middle" transform="translate(404.30,344.60) scale(0.9,1)">30</text>
<path d="M456.80 323.60 V328.10" stroke="#3c3c3c" stroke-width="1.3"/>
<text x="0.00" y="0.00" font-size="15.6" text-anchor="middle" transform="translate(456.80,344.60) scale(0.9,1)">35</text>
<path d="M509.30 323.60 V328.10" stroke="#3c3c3c" stroke-width="1.3"/>
<text x="0.00" y="0.00" font-size="15.6" text-anchor="middle" transform="translate(509.30,344.60) scale(0.9,1)">40</text>
<text x="292.50" y="23.30" font-size="17.8" text-anchor="middle">Train &amp; Test Accuracy</text>
<text x="0.00" y="0.00" font-size="15.6" text-anchor="middle" transform="translate(292.60,364.50) scale(0.94,1)">No. of Epoch</text>
<text transform="translate(20.60,179.40) rotate(-90) scale(0.93,1)" font-size="15.6" text-anchor="middle">Accuracy</text>
<rect x="365.30" y="272.60" width="146.9" height="43.7" rx="2.5" fill="#ffffff" fill-opacity="0.8" stroke="#d5d5d5" stroke-width="1"/>
<path d="M368.70 282.60 H398.20" stroke="#2d7fba" stroke-width="4"/>
<path d="M368.70 302.70 H398.20" stroke="#fd8a25" stroke-width="4"/>
<text x="0.00" y="0.00" font-size="15.6" text-anchor="start" transform="translate(409.00,289.60) scale(0.934,1)">Train Accuracy</text>
<text x="0.00" y="0.00" font-size="15.6" text-anchor="start" transform="translate(409.00,309.50) scale(0.925,1)">Test Accuracy</text></svg>
<svg class="a" style="left:3px;top:304px" width="114" height="82" viewBox="0 0 570 410" font-family="Liberation Sans" fill="#333"><rect width="570" height="410" fill="#fff"/><rect x="64.5" y="30" width="498.5" height="322.5" fill="none" stroke="#999" stroke-width="2.25"/><polyline points="87.5,35.0 93.2,70.0 104.7,140.0 116.2,185.0 133.5,210.0 156.4,227.5 190.9,240.0 248.3,250.0 317.2,262.5 386.2,275.0 455.1,292.5 524.0,310.0" fill="none" stroke="#3d85b8" stroke-width="3.0"/><polyline points="87.5,55.0 93.2,80.0 104.7,145.0 116.2,190.0 133.5,212.5 156.4,225.0 190.9,235.0 248.3,247.5 317.2,262.5 386.2,277.5 455.1,300.0 524.0,320.0" fill="none" stroke="#fd9a45" stroke-width="3.0"/><text x="54.0" y="60.5" font-size="13.1" text-anchor="end" stroke="#555" stroke-width="0.25">2.6</text><text x="54.0" y="103.5" font-size="13.1" text-anchor="end" stroke="#555" stroke-width="0.25">2.4</text><text x="54.0" y="145.0" font-size="13.1" text-anchor="end" stroke="#555" stroke-width="0.25">2.2</text><text x="54.0" y="185.0" font-size="13.1" text-anchor="end" stroke="#555" stroke-width="0.25">2.0</text><text x="54.0" y="225.0" font-size="13.1" text-anchor="end" stroke="#555" stroke-width="0.25">1.8</text><text x="54.0" y="266.0" font-size="13.1" text-anchor="end" stroke="#555" stroke-width="0.25">1.6</text><text x="54.0" y="306.0" font-size="13.1" text-anchor="end" stroke="#555" stroke-width="0.25">1.4</text><text x="54.0" y="346.0" font-size="13.1" text-anchor="end" stroke="#555" stroke-width="0.25">1.2</text><text x="87.5" y="372.5" font-size="13.1" text-anchor="middle" stroke="#555" stroke-width="0.25">0</text><text x="144.5" y="372.5" font-size="13.1" text-anchor="middle" stroke="#555" stroke-width="0.25">5</text><text x="202.0" y="372.5" font-size="13.1" text-anchor="middle" stroke="#555" stroke-width="0.25">10</text><text x="259.0" y="372.5" font-size="13.1" text-anchor="middle" stroke="#555" stroke-width="0.25">15</text><text x="316.0" y="372.5" font-size="13.1" text-anchor="middle" stroke="#555" stroke-width="0.25">20</text><text x="374.0" y="372.5" font-size="13.1" text-anchor="middle" stroke="#555" stroke-width="0.25">25</text><text x="431.5" y="372.5" font-size="13.1" text-anchor="middle" stroke="#555" stroke-width="0.25">30</text><text x="488.5" y="372.5" font-size="13.1" text-anchor="middle" stroke="#555" stroke-width="0.25">35</text><text x="547.0" y="372.5" font-size="13.1" text-anchor="middle" stroke="#555" stroke-width="0.25">40</text><text x="312.5" y="21.0" font-size="15.0" text-anchor="middle" stroke="#555" stroke-width="0.25">Train &amp; Test Loss</text><text x="310.0" y="395.0" font-size="13.1" text-anchor="middle" stroke="#555" stroke-width="0.25">No. of Epoch</text><text transform="translate(18.0,203.0) rotate(-90)" font-size="10.5" text-anchor="middle">loss</text><rect x="432.5" y="40.5" width="120" height="45.5" fill="#fff" stroke="#ddd" stroke-width="1.5"/><path d="M440 53.0 H477.5" stroke="#3d85b8" stroke-width="3.0"/><path d="M440 74.0 H477.5" stroke="#fd9a45" stroke-width="3.0"/><text x="485.0" y="57.0" font-size="13.1" text-anchor="start" stroke="#555" stroke-width="0.25">Train loss</text><text x="485.0" y="78.0" font-size="13.1" text-anchor="start" stroke="#555" stroke-width="0.25">Test loss</text></svg>
</div>
</body></html>
